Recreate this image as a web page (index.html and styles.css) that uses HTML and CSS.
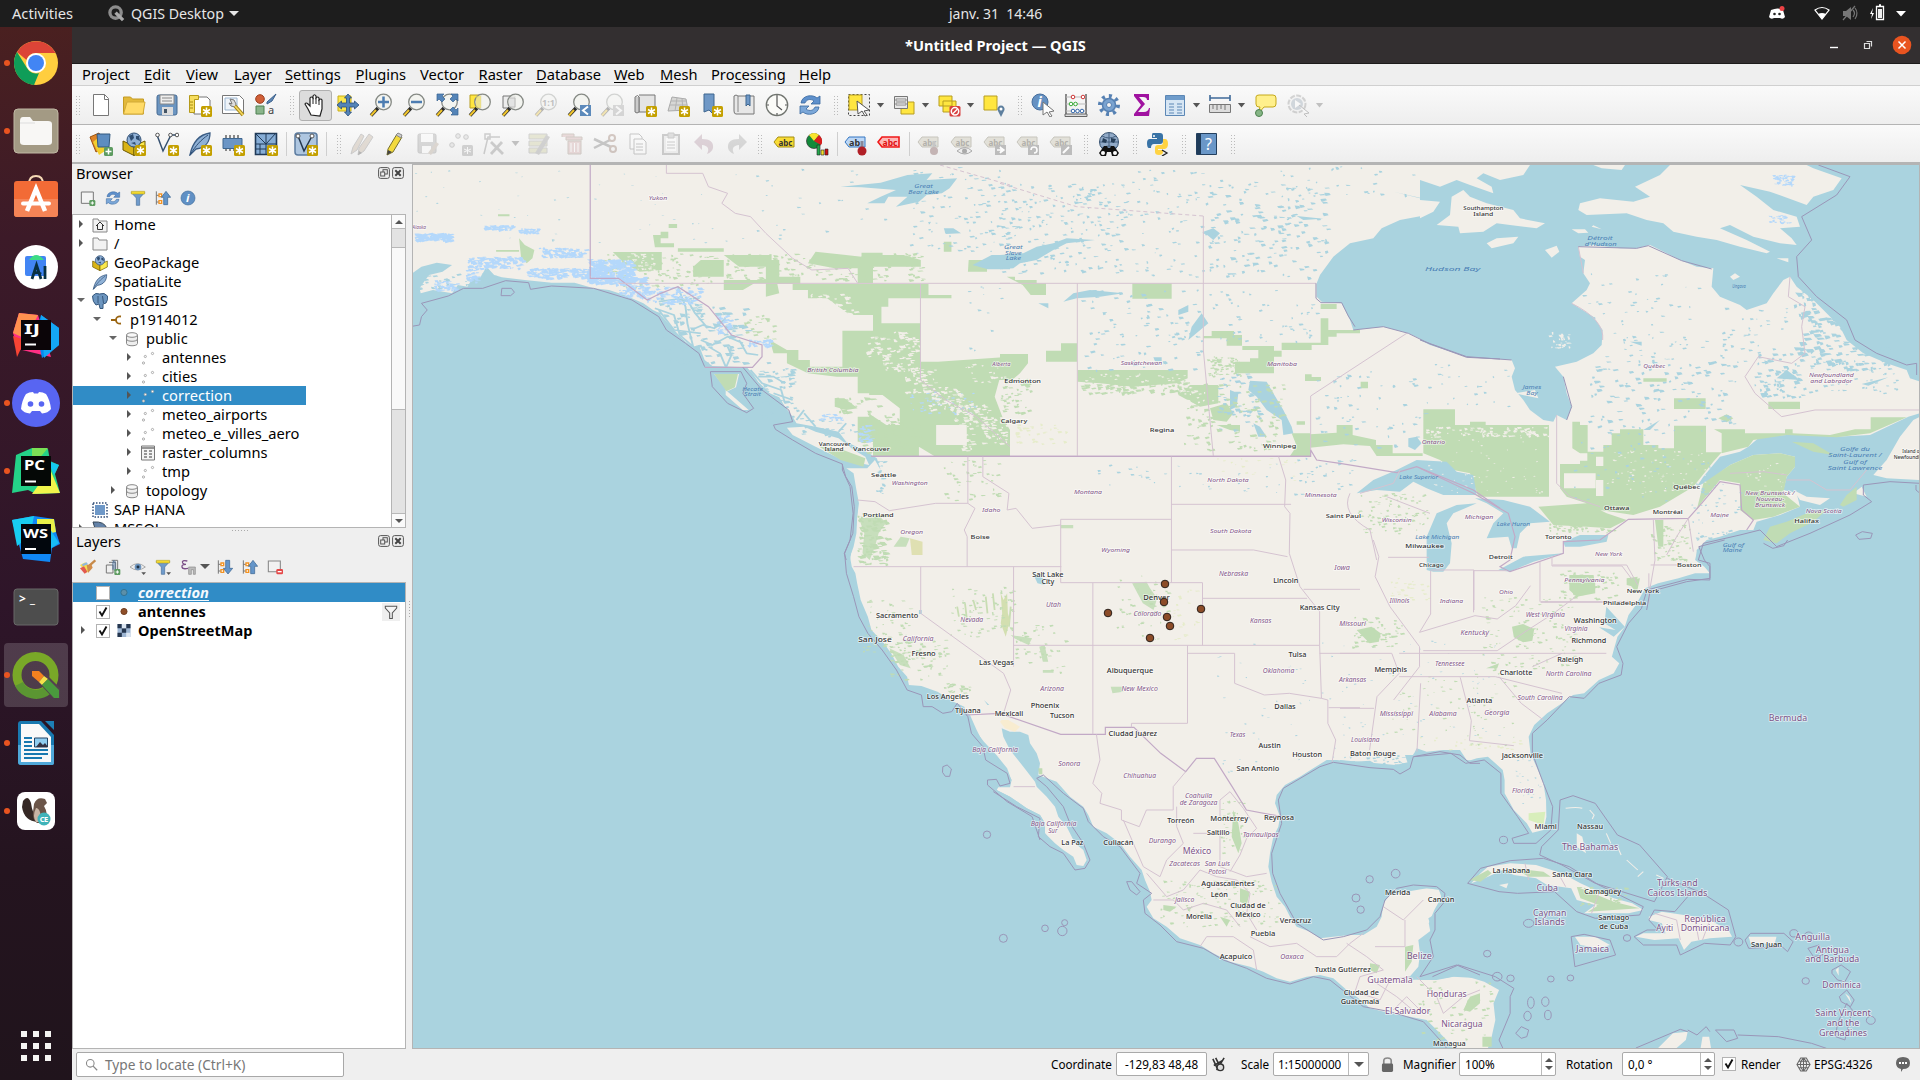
FILE: index.html
```html
<!DOCTYPE html>
<html lang="en">
<head>
<meta charset="utf-8">
<title>*Untitled Project — QGIS</title>
<link rel="stylesheet" href="styles.css">
</head>
<body>
<svg width="0" height="0" class="defs" aria-hidden="true"><defs>
<symbol id="star" viewBox="0 0 24 24"><rect x="13" y="13" width="11" height="11" rx="1.500" fill="#c4a000"/><path d="M18.500 14.500v8M15 16.500l7 4M15 20.500l7-4" stroke="#fff" stroke-width="1.500"/></symbol>
<symbol id="mag" viewBox="0 0 24 24"><path d="M9 15L2 22.500" stroke="#2b2b2b" stroke-width="3.400"/><path d="M7 17l-5 5.500" stroke="#f0c52c" stroke-width="2"/><circle cx="14.500" cy="9" r="7.800" fill="#f2f3ef" fill-opacity=".85" stroke="#868a85" stroke-width="1.300"/></symbol>
<symbol id="tag" viewBox="0 0 24 24"><path d="M2 11l4-5h16v10H6z" fill="#dedcd2" stroke="#bcbab0"/><text x="6.500" y="14.500" font-size="9" font-weight="700" fill="#a3a19a" textLength="14" lengthAdjust="spacingAndGlyphs">abc</text></symbol>
<symbol id="refresh" viewBox="0 0 24 24"><path d="M3 10c1-8 12-9 16-5l3-2v8h-9l3-3C12 5 8 7 7 10z" fill="#5e90cc" stroke="#39689f" stroke-width=".8"/><path d="M21 14c-1 8-12 9-16 5l-3 2v-8h9l-3 3c4 3 8 1 9-2z" fill="#7ba7d8" stroke="#39689f" stroke-width=".8"/></symbol>
<symbol id="funnel" viewBox="0 0 24 24"><path d="M2 4h20l-7.500 8v11h-5V12z" fill="#6f9bcc" stroke="#48709a"/><path d="M2 2h20v4H2z" fill="#f2d930" stroke="#b09a20" stroke-width=".8"/></symbol>
<symbol id="treeup" viewBox="0 0 24 24"><path d="M2 2v20M2 8h5M2 18h5" stroke="#777" stroke-width="1.500"/><path d="M6 6h4v4H6zM6 16h4v4H6z" fill="#fff" stroke="#f39322" stroke-width="2"/><path d="M19 22h-6V11H9.500l7-9 7 9H19z" fill="#6495c9" stroke="#36618e"/></symbol>
<symbol id="treedown" viewBox="0 0 24 24"><path d="M2 2v20M2 8h5M2 18h5" stroke="#777" stroke-width="1.500"/><path d="M6 6h4v4H6zM6 16h4v4H6z" fill="#fff" stroke="#f39322" stroke-width="2"/><path d="M13 2h6v12h4.500l-7 8.500-7-8.500H13z" fill="#6495c9" stroke="#36618e"/></symbol>
<symbol id="pts" viewBox="0 0 16 16"><g fill="#fff" stroke="#aaa"><circle cx="5.300" cy="6.500" r="1.100"/><circle cx="12.500" cy="3.500" r="1.100"/><circle cx="3.500" cy="13" r="1.100"/></g></symbol>
<symbol id="db" viewBox="0 0 16 16"><path d="M2.500 4v8.500c0 3 11 3 11 0V4" fill="#eee" stroke="#888"/><ellipse cx="8" cy="4" rx="5.500" ry="2.300" fill="#f8f8f8" stroke="#888"/><path d="M2.500 8c0 3 11 3 11 0" fill="none" stroke="#888"/></symbol>
<symbol id="feather" viewBox="0 0 24 24"><path d="M2 23C4 13 9 3 22 1c0 8-4 15-14 16z" fill="#8fb1d6" stroke="#3a5c84" stroke-width="1.300"/><path d="M2 23C8 13 13 8 20 3" fill="none" stroke="#2f4f76"/></symbol>
<symbol id="cube" viewBox="0 0 24 24"><path d="M1 9l11 5v9.500L1 18z" fill="#d9b417" stroke="#6d5800"/><path d="M23 9l-11 5v9.500L23 18z" fill="#fbe94c" stroke="#6d5800"/><circle cx="12" cy="8" r="7" fill="#8fb0d6" stroke="#304f74"/><path d="M7 4l4-2 1 4-3 3zM14 4l3 0 1 5-4-2zM9 11l4-1 1 3z" fill="#2f4d71"/></symbol>
<symbol id="gemA" viewBox="0 0 48 48"><path d="M7 2l19 2 13 42-33-8L1 22z" fill="#ff2f83"/><path d="M7 2L1 22l13 6 12-24z" fill="#ff914f"/><path d="M29 4l18 13v17L30 47 24 20z" fill="#0789ee"/><path d="M29 4l3 43 15-13V17z" fill="#14a7f5"/><path d="M1 25l12 4-8 17z" fill="#f84434"/></symbol>
<symbol id="ticks" viewBox="0 0 14 14"><rect x=".5" y=".5" width="13" height="13" fill="#fff" stroke="#b3b3b3"/><path d="M3.500 6.500l2.500 4 4.500-8" fill="none" stroke="#111" stroke-width="1.900"/></symbol>
<symbol id="float" viewBox="0 0 12 12"><rect x=".6" y=".6" width="10.800" height="10.800" rx="2" fill="none" stroke="#555"/><rect x="5" y="2.700" width="4.300" height="4.300" fill="none" stroke="#555"/><rect x="2.700" y="5" width="4" height="4" fill="#eee" stroke="#555"/></symbol>
<symbol id="shut" viewBox="0 0 12 12"><rect x=".6" y=".6" width="10.800" height="10.800" rx="2" fill="none" stroke="#555"/><path d="M3.300 3.300l5.400 5.400m0-5.400L3.300 8.700" stroke="#444" stroke-width="2"/></symbol>
</defs></svg>

<header class="topbar">
  <span class="activities">Activities</span>
  <svg class="qmono" viewBox="0 0 18 18"><circle cx="8" cy="8" r="6" fill="none" stroke="#8d8d8d" stroke-width="3.500"/><path d="M8 8l8 8" stroke="#aaa" stroke-width="3.500"/></svg>
  <span class="appname">QGIS Desktop</span><i class="caret light"></i>
  <time class="clock">janv. 31&nbsp; 14:46</time>
  <svg class="tray" viewBox="0 0 144 27"><path d="M4 10q7-3 12 0l2 7q-2 3-5 1H7q-3 2-5-1z" fill="#fff"/><circle cx="7.500" cy="14" r="1.300" fill="#222"/><circle cx="12.500" cy="14" r="1.300" fill="#222"/><circle cx="15" cy="8.500" r="2.500" fill="#ed4245"/><path d="M48 10q7-5 14 0l-7 9z" fill="none" stroke="#fff" stroke-width="1.200"/><path d="M51 14q4-2 8 0l-4 5z" fill="#fff"/><path d="M76 11h3l5-4v13l-5-4h-3z" fill="#777"/><path d="M76 20L88 6M86 10q3 3 0 7M88 8q4 5 0 11" fill="none" stroke="#777" stroke-width="1.200"/><path d="M106 8l-3 6h2l-1 5 3-6h-2z" fill="#fff"/><path d="M109.500 6.500h7v13h-7zM112 5h2" fill="none" stroke="#fff" stroke-width="1.300"/><path d="M111 9h4v9h-4z" fill="#eee"/><path d="M129 11h10l-5 5.500z" fill="#fff"/></svg>
</header>

<div class="desktop">
<nav class="dock">
  <div class="app run"><svg viewBox="0 0 48 48"><circle cx="24" cy="24" r="22" fill="#ffce3f"/><path d="M5 13A22 22 0 0 1 43.500 14H24a10 10 0 0 0-9.500 7z" fill="#dc4437"/><path d="M5 13l10 16a10 10 0 0 0 12 5l-5 12A22 22 0 0 1 5 13z" fill="#0f9d58"/><circle cx="24" cy="24" r="10" fill="#fff"/><circle cx="24" cy="24" r="8" fill="#4285f4"/></svg></div>
  <div class="app run"><svg viewBox="0 0 48 48"><rect x="2" y="2" width="44" height="44" rx="4" fill="#a39a84" stroke="#c0b8a4"/><path d="M8 14q0-4 3-4h7l3 4h15q4 0 4 3v18q0 3-4 3H12q-4 0-4-3z" fill="#f8f7f5"/><path d="M8 16h15" stroke="#ddd"/></svg></div>
  <div class="app"><svg viewBox="0 0 48 48"><path d="M17 9q0-8 7-8t7 8" fill="none" stroke="#f5d9b5" stroke-width="2"/><rect x="2" y="6" width="44" height="36" rx="3" fill="#f26b36"/><path d="M2 24h44v15q0 3-3 3H5q-3 0-3-3z" fill="#f58456"/><path d="M15 36l9-22 9 22" fill="none" stroke="#fff" stroke-width="4.500"/><path d="M11 28.500h26" stroke="#fff" stroke-width="4" stroke-linecap="round"/></svg></div>
  <div class="app"><svg viewBox="0 0 48 48"><circle cx="24" cy="24" r="22" fill="#fff"/><rect x="13" y="13" width="21" height="20" rx="2" fill="#4285f4"/><path d="M17 17q7-10 15 0z" fill="#3ddc84"/><path d="M20 36l4.500-14L29 36M21 31q4-3 8 0M33 23v13" fill="none" stroke="#073042" stroke-width="2.800"/></svg></div>
  <div class="app"><svg viewBox="0 0 48 48"><use href="#gemA"/><rect x="9" y="9" width="30" height="30" fill="#0b0508"/><text x="12" y="23" font-size="14" font-weight="700" fill="#fff" textLength="16" lengthAdjust="spacingAndGlyphs">IJ</text><path d="M13 33.500h11" stroke="#fff" stroke-width="2"/></svg></div>
  <div class="app run"><svg viewBox="0 0 48 48"><circle cx="24" cy="24" r="24" fill="#5865f2"/><path d="M14 15q3-2 7-2l1 1.500h4l1-1.500q4 0 7 2 4 6 5 15-3 4-9 4.500l-2-2.500h-8l-2 2.500q-6-.5-9-4.500 1-9 5-15z" fill="#fff"/><circle cx="18.500" cy="25" r="2.800" fill="#5865f2"/><circle cx="29.500" cy="25" r="2.800" fill="#5865f2"/></svg></div>
  <div class="app run"><svg viewBox="0 0 48 48"><path d="M4 8l16-7 16 1 2 12 9 4-4 9 5 19-24 1-8-4-16 3z" fill="#24d288"/><path d="M20 1h16L20 20z" fill="#7be055"/><path d="M36 14l11 4-5 10z" fill="#14c8f0"/><path d="M38 22l10 24-28 1z" fill="#f1f54b"/><rect x="9" y="9" width="30" height="30" fill="#050806"/><text x="12" y="23" font-size="14" font-weight="700" fill="#fff" textLength="21" lengthAdjust="spacingAndGlyphs">PC</text><path d="M13 34.500h11" stroke="#fff" stroke-width="2"/></svg></div>
  <div class="app"><svg viewBox="0 0 48 48"><path d="M0 5l22-4 20 3 2 13 4 12-8 4-2 14-27-3z" fill="#1088f5"/><path d="M0 5l22-4-4 20-13 10z" fill="#18cdf1"/><path d="M25 4l17 0 2 13-19 4z" fill="#e8f149"/><path d="M38 14l9 14-9 6z" fill="#18bdf4"/><rect x="9" y="9" width="30" height="30" fill="#02070d"/><text x="11" y="23" font-size="13" font-weight="700" fill="#fff" textLength="25" lengthAdjust="spacingAndGlyphs">WS</text><path d="M13 34h11" stroke="#fff" stroke-width="2"/></svg></div>
  <div class="app"><svg viewBox="0 0 48 48"><rect x="2" y="6" width="44" height="36" rx="3" fill="#4d4d4d" stroke="#686868"/><text x="7" y="20" font-size="12" font-weight="700" fill="#fff" textLength="16">&gt;_</text></svg></div>
  <div class="app run active"><svg viewBox="0 0 48 48"><circle cx="23.500" cy="24" r="18.500" fill="none" stroke="#79a828" stroke-width="9"/><path d="M7 33a19 19 0 0 0 29 6" fill="none" stroke="#5b9632" stroke-width="9"/><path d="M26 31l8-8 15 15v9h-8z" fill="#54404f"/><path d="M20 20h7l5 5-5 6-7-6z" fill="#f38120"/><path d="M27 31l5-6 4 3-6 6z" fill="#f4e24b"/><path d="M30 34l6-6 11 11v8h-5z" fill="#4a9a3d"/></svg></div>
  <div class="app run"><svg viewBox="0 0 48 48"><path d="M9 2h20l13 14v28q0 2-3 2H9q-3 0-3-3V5q0-3 3-3z" fill="#1979b0"/><path d="M6 26h36v18q0 2-3 2H9q-3 0-3-3z" fill="#4fa8d9"/><path d="M9 5h18l12 13v25H9z" fill="#f9f9f9"/><path d="M33 2h9v9z" fill="#1d7fb5"/><path d="M12 19h8M12 23h8M12 27h8M12 31h24M12 35h24M12 39h18" stroke="#1979b0" stroke-width="1.800"/><path d="M22.500 19h13v9h-13z" fill="#8fcdf0" stroke="#246"/><path d="M24 28l4-5 3 3 2-2 3 4z" fill="#334"/></svg></div>
  <div class="app run"><svg viewBox="0 0 48 48"><rect x="5" y="5" width="38" height="38" rx="8" fill="#fff"/><path d="M11 14q5-7 8 2 1 9 7 19-14-1-16-15z" fill="#352824"/><path d="M22 17q3-8 11-5l2 4-3 3q5 8 1 17h-8q-5-4-4-11z" fill="#6b5549"/><path d="M24 21q5 0 5 14h-5q-4-6 0-14z" fill="#c9b5a5"/><circle cx="32" cy="32" r="6.500" fill="#3fb3b9"/><text x="27.700" y="35" font-size="7.500" font-weight="700" fill="#fff" textLength="8.500">CE</text></svg></div>
  <svg class="grid9" viewBox="0 0 30 30"><path d="M0 3h6m6 0h6m6 0h6M0 15h6m6 0h6m6 0h6M0 27h6m6 0h6m6 0h6" stroke="#f5f4f2" stroke-width="6"/></svg>
</nav>

<main class="window">
<div class="titlebar"><b>*Untitled Project — QGIS</b><svg viewBox="0 0 94 36"><path d="M6 20.500h8" stroke="#fff" stroke-width="1.400"/><path d="M40.500 16.500h5v5h-5zM42.500 14.500h5v5" fill="none" stroke="#ddd" stroke-width="1.200"/><circle cx="78" cy="18" r="9.300" fill="#e95420"/><path d="M74.500 14.500l7 7m0-7l-7 7" stroke="#fff" stroke-width="1.500"/></svg></div>
<div class="menubar"><span>Pro<u>j</u>ect</span><span><u>E</u>dit</span><span><u>V</u>iew</span><span><u>L</u>ayer</span><span><u>S</u>ettings</span><span><u>P</u>lugins</span><span>Vect<u>o</u>r</span><span><u>R</u>aster</span><span><u>D</u>atabase</span><span><u>W</u>eb</span><span><u>M</u>esh</span><span>Pro<u>c</u>essing</span><span><u>H</u>elp</span></div>

<div class="toolbar">
<i class="grip first"></i>
<span class="c"><svg viewBox="0 0 24 24"><path d="M4.500 1.500h11l4 4v17h-15z" fill="#fff" stroke="#777"/><path d="M15.500 1.500v5h4" fill="none" stroke="#777"/></svg></span>
<span class="c"><svg viewBox="0 0 24 24"><path d="M1.500 21V4h7l2 2h11v15z" fill="#e2b93b" stroke="#c49b22"/><path d="M1.500 21L5 9h18l-2 12z" fill="#ffdb68" stroke="#d2aa38"/></svg></span>
<span class="c"><svg viewBox="0 0 24 24"><rect x="2" y="2" width="20" height="20" rx="2" fill="#6b95c1" stroke="#466b93"/><path d="M5 2h14v9H5z" fill="#eee" stroke="#888"/><path d="M7 5h10M7 8h10" stroke="#888"/><path d="M7 14h11v8H7z" fill="#ddd"/><path d="M9 16h3v4H9z" fill="#456"/></svg></span>
<span class="c"><svg viewBox="0 0 24 24"><path d="M6 4h13l3 3v14H6z" fill="#fff" stroke="#777"/><path d="M1.500 2.500h9v4h-4v13h-5z" fill="#f6dd5e" stroke="#b59a1a"/><path d="M2 9h3M2 12h3M2 15h3" stroke="#aa8e10"/><use href="#star"/></svg></span>
<span class="c"><svg viewBox="0 0 24 24"><path d="M1.500 2.500h17l4 4v14h-21z" fill="#fff" stroke="#777"/><path d="M4 5h12v12H4z" fill="#eef3f8" stroke="#9cb6d0"/><path d="M9 6l4 1 2 4-1 3-4-1-2-3 3 1z" fill="#ddd" stroke="#777"/><path d="M14 13l8 9" stroke="#a48515" stroke-width="3.500"/><path d="M14 13l8 9" stroke="#f4d75d" stroke-width="1.800"/></svg></span>
<span class="c"><svg viewBox="0 0 24 24"><circle cx="6" cy="6" r="4.300" fill="#d15f37" stroke="#9b3e1e"/><path d="M13 9l9-8-4 7-5 3z" fill="#5d87b6" stroke="#3c618c"/><path d="M2 13h8v8H2z" fill="#8bb58b" stroke="#4c8050"/><text x="14" y="20.500" font-size="11" fill="#444">a</text></svg></span>
<i class="grip"></i>
<span class="c pressed"><svg viewBox="0 0 24 24"><path d="M8 22l-3-6-3-5q1-2 3 0l2 2V5q1.500-2 3 0V3q1.500-2.500 3 0v2q1.500-2 3 0v2q2-2 3 0v9l-2 7z" fill="#fff" stroke="#222" stroke-width="1.200"/><path d="M10 5v6M13 5v6M16 7v5" stroke="#222"/></svg></span>
<span class="c"><svg viewBox="0 0 24 24"><path d="M2 3h13v15H2z" fill="#fde84c" stroke="#c9ae1b"/><path d="M12 1l3.500 4h-2v5h5V8l4.500 4-4.500 4v-2h-5v5h2L12 23l-3.500-4h2v-5h-5v2L1 12l4.500-4v2h5V5h-2z" fill="#5484b8" stroke="#294e7c" stroke-width=".8"/></svg></span>
<span class="c"><svg viewBox="0 0 24 24"><use href="#mag"/><path d="M9 9h11M14.500 3.500v11" stroke="#4d7db1" stroke-width="2.500"/></svg></span>
<span class="c"><svg viewBox="0 0 24 24"><use href="#mag"/><path d="M9 9h11" stroke="#4d7db1" stroke-width="2.500"/></svg></span>
<span class="c"><svg viewBox="0 0 24 24"><use href="#mag"/><path d="M2 1h7L7 3l3 3-3 3-3-3-2 2zM23 1h-7l2 2-3 3 3 3 3-3 2 2zM23 22h-7l2-2-3-3 3-3 3 3 2-2z" fill="#5484b8" stroke="#37618f" stroke-width=".7"/></svg></span>
<span class="c"><svg viewBox="0 0 24 24"><path d="M2 2h11v13H2z" fill="#ffe640" stroke="#b79d20"/><use href="#mag"/><path d="M8 3h5v12H8z" fill="#e8d85a" opacity=".6"/></svg></span>
<span class="c"><svg viewBox="0 0 24 24"><path d="M2 3h12v12H2z" fill="#ececec" stroke="#777"/><use href="#mag"/><path d="M8 5h6v9H8" fill="#ddd" stroke="#aaa" opacity=".7"/></svg></span>
<span class="c off"><svg viewBox="0 0 24 24"><use href="#mag"/><text x="8" y="12.500" font-size="9" font-weight="700" fill="#555" textLength="13">1:1</text></svg></span>
<span class="c"><svg viewBox="0 0 24 24"><use href="#mag"/><path d="M13 12h11v11H13z" fill="#5c8abb"/><path d="M21 13.500l-5 4 5 4" fill="none" stroke="#fff" stroke-width="2"/></svg></span>
<span class="c off"><svg viewBox="0 0 24 24"><use href="#mag"/><path d="M13 12h11v11H13z" fill="#999"/><path d="M16 13.500l5 4-5 4" fill="none" stroke="#fff" stroke-width="2"/></svg></span>
<span class="c"><svg viewBox="0 0 24 24"><path d="M2 4q3-3 4 0v15H22V2H6" fill="#e4e4e4" stroke="#777"/><path d="M2 4v15q2 2 4 0V4" fill="#ccc" stroke="#777"/><use href="#star"/></svg></span>
<span class="c"><svg viewBox="0 0 24 24"><path d="M6 4l14 2 2 11-20 1z" fill="#d7d7d5" stroke="#aaa"/><path d="M4 12l17 0M11 5l-2 13M16 5l1 13M5 8h16" stroke="#b3b3b3"/><use href="#star"/></svg></span>
<span class="c"><svg viewBox="0 0 24 24"><path d="M5 1h10v21l-5-5-5 2z" fill="#6f98c6" stroke="#3e668f"/><use href="#star"/></svg></span>
<span class="c"><svg viewBox="0 0 24 24"><path d="M2 3q2-2 4 0h16v18H4q-2 0-2-3z" fill="#e7e7e7" stroke="#777"/><path d="M6 3v16" stroke="#888"/><path d="M14 2h4v11l-2-2-2 2z" fill="#6f98c6" stroke="#3e668f"/></svg></span>
<span class="c"><svg viewBox="0 0 24 24"><circle cx="12" cy="12" r="10.700" fill="#fbfbf8" stroke="#70746f" stroke-width="1.300"/><path d="M12 4v9l5 4M12 2v2M12 20v2M2 12h2M20 12h2" stroke="#555" fill="none" stroke-width="1.200"/></svg></span>
<span class="c"><svg viewBox="0 0 24 24"><use href="#refresh"/></svg></span>
<i class="grip"></i>
<span class="c"><svg viewBox="0 0 24 24"><path d="M1.500 1.500h21v21h-21z" fill="#eee" stroke="#444" stroke-dasharray="2 2"/><path d="M2 2h13v15H2z" fill="#ffe640" stroke="#b79d20"/><path d="M10 8l12 9-5 1 3 4-2 1-3-5-4 3z" fill="#fff" stroke="#555"/></svg></span><i class="a"></i>
<span class="c"><svg viewBox="0 0 24 24"><path d="M9 9h13v12H9z" fill="#ffe640" stroke="#b79d20"/><path d="M2.500 3.500h13v12h-13z" fill="#e8e8e8" stroke="#777"/><path d="M4 6h10v2H4zM4 10h10v2H4z" fill="#fff" stroke="#888"/></svg></span><i class="a"></i>
<span class="c"><svg viewBox="0 0 24 24"><path d="M2 3h13v10H2zM6 8h13v11H6z" fill="#ffe640" stroke="#b79d20"/><rect x="12.500" y="13" width="11" height="10.500" rx="1.500" fill="#d84040"/><circle cx="18" cy="18.300" r="3.700" fill="none" stroke="#fff" stroke-width="1.500"/><path d="M15.500 21l5-5" stroke="#fff" stroke-width="1.500"/></svg></span><i class="a"></i>
<span class="c"><svg viewBox="0 0 24 24"><path d="M2 3h13v14H2z" fill="#ffe640" stroke="#b79d20"/><path d="M19 24l-3.500-7a3.600 3.600 0 1 1 7 0z" fill="#5e7f9e"/><circle cx="19" cy="16" r="1.500" fill="#fff"/></svg></span>
<i class="grip"></i>
<span class="c"><svg viewBox="0 0 24 24"><circle cx="9" cy="9" r="8" fill="#6591c2" stroke="#476f9e"/><text x="6.500" y="14" font-size="14" font-family="Liberation Serif" font-style="italic" font-weight="700" fill="#fff">i</text><path d="M12 9l11 9-5 1 3 4-2 1-3-5-4 3z" fill="#fff" stroke="#777"/></svg></span>
<span class="c"><svg viewBox="0 0 24 24"><path d="M2 1v20M22 1v20" stroke="#666" stroke-width="1.500"/><path d="M1 21h22v2.500H1z" fill="#ddd" stroke="#666"/><path d="M2 4h20M2 11h20M2 18h20" stroke="#bbb"/><g fill="#fff" stroke-width="1"><g stroke="#c33"><circle cx="9" cy="4" r="1.800"/><circle cx="19" cy="4" r="1.800"/></g><g stroke="#3a3"><circle cx="7" cy="11" r="1.800"/><circle cx="11.500" cy="11" r="1.800"/></g><g stroke="#36a"><circle cx="9" cy="18" r="1.800"/><circle cx="13.500" cy="18" r="1.800"/><circle cx="18" cy="18" r="1.800"/></g></g></svg></span>
<span class="c"><svg viewBox="0 0 24 24"><circle cx="12" cy="12" r="9" fill="none" stroke="#5681b3" stroke-width="4" stroke-dasharray="3 4"/><circle cx="12" cy="12" r="6.500" fill="#7aa3d0" stroke="#5681b3" stroke-width="1.500"/><circle cx="12" cy="12" r="2.500" fill="#f3f3f3" stroke="#5681b3"/></svg></span>
<span class="c"><svg viewBox="0 0 24 24"><path d="M4 1h15v6h-2q0-3-4-3H9l6 7-7 8h6q4 0 5-4h1l-1 8H4v-2l7-9-7-9z" fill="#a012a0"/></svg></span>
<span class="c"><svg viewBox="0 0 24 24"><path d="M2.500 2.500h19v20h-19z" fill="#d7e6f4" stroke="#5c87b5"/><path d="M3 3h18v4H3z" fill="#6f9ccb"/><path d="M6 11h5M6 14h5M6 17h5M14 11h5M14 14h5M14 17h5M6 20h5M14 20h5" stroke="#5c87b5"/></svg></span><i class="a"></i>
<span class="c"><svg viewBox="0 0 24 24"><path d="M2 5h20M2 2v6M22 2v6" stroke="#3f6a99" stroke-width="1.600"/><path d="M1.500 11.500h21v8h-21z" fill="#ddd" stroke="#777"/><path d="M5 12v4M9 12v5M13 12v4M17 12v5" stroke="#777"/></svg></span><i class="a"></i>
<span class="c"><svg viewBox="0 0 24 24"><path d="M3 4q0-2 3-2h14q3 0 3 3v6q0 3-3 3h-9l-6 7 2-7H6q-3 0-3-3z" fill="#fff08c" stroke="#c5a91a"/><circle cx="6" cy="20" r="3.500" fill="#86b586" stroke="#4d824f"/></svg></span>
<span class="c off"><svg viewBox="0 0 24 24"><circle cx="11" cy="11" r="8.500" fill="#eee" stroke="#888" stroke-width="2" stroke-dasharray="5 1.500"/><circle cx="11" cy="11" r="6" fill="#89a"/><path d="M9 7l6 4-6 4z" fill="#fff"/><path d="M13 12l10 8-5 1 3 3" fill="#fff" stroke="#555"/></svg></span><i class="a off"></i>
</div>

<div class="toolbar two">
<i class="grip first"></i>
<span class="c"><svg viewBox="0 0 24 24"><path d="M1 5l9-4 6 14-9 5z" fill="#e08528" stroke="#9d5411"/><path d="M4 10l6-5 9 12-9 6z" fill="#f2d02f"/><path d="M8 2h13l-1 13H9z" fill="#5e8dc0" stroke="#32597f"/><rect x="15" y="15" width="9" height="9" rx="1.500" fill="#5d9b60"/><path d="M19.500 16.500v6M16.500 19.500h6" stroke="#fff" stroke-width="1.500"/></svg></span>
<span class="c"><svg viewBox="0 0 24 24"><use href="#cube"/><use href="#star"/></svg></span>
<span class="c"><svg viewBox="0 0 24 24"><path d="M2 3l6 16 8-16h5" fill="none" stroke="#35506f" stroke-width="1.500"/><g fill="#fff" stroke="#555"><circle cx="2.500" cy="3" r="1.800"/><circle cx="15.500" cy="3" r="1.800"/><circle cx="22" cy="3" r="1.800"/></g><use href="#star"/></svg></span>
<span class="c"><svg viewBox="0 0 24 24"><use href="#feather"/><use href="#star"/></svg></span>
<span class="c"><svg viewBox="0 0 24 24"><path d="M5 3v16M9 3v16M13 3v16M17 3v16" stroke="#666" stroke-width="1.500"/><path d="M2 6.500h19v10H2z" fill="#6b95c5" stroke="#3e668f"/><use href="#star"/></svg></span>
<span class="c"><svg viewBox="0 0 24 24"><path d="M1.500 1.500h21v21h-21z" fill="#86add6" stroke="#203a58" stroke-width="1.600"/><path d="M1 12h22M12 1v22M1 1l11 11M12 12L22 1M1 17h11M6 12v11" stroke="#203a58"/><use href="#star"/></svg></span>
<i class="bar"></i>
<span class="c"><svg viewBox="0 0 24 24"><rect x="1" y="1" width="22" height="22" rx="3" fill="#aec6e0" stroke="#5c7ca0" stroke-width="1.500"/><path d="M4 4l6 15 8-15" fill="none" stroke="#23374e" stroke-width="1.500"/><circle cx="4" cy="4" r="2" fill="#fff" stroke="#555"/><circle cx="18" cy="4" r="2" fill="#fff" stroke="#555"/><use href="#star"/></svg></span>
<i class="bar"></i><i class="grip"></i>
<span class="c off"><svg viewBox="0 0 24 24"><path d="M1 22l2-7 8-13 3 2-7 14zM8 23l1-7L19 2l4 3-9 14z" fill="#b9a58f" stroke="#777"/><path d="M8 23l1-4 3 2z" fill="#333"/></svg></span>
<span class="c"><svg viewBox="0 0 24 24"><path d="M4 23l1-6L14 2l5 3-9 15z" fill="#f3da3e" stroke="#77702f"/><path d="M4 23l1-5 4 2z" fill="#444"/><path d="M13 3l5 3 1-3-4-2z" fill="#ccc" stroke="#888"/></svg></span>
<span class="c off"><svg viewBox="0 0 24 24"><rect x="2" y="2" width="18" height="19" rx="1.500" fill="#999" stroke="#777"/><path d="M5 2h12v8H5zM6 14h9v7H6z" fill="#fff"/><path d="M12 21l8-11 3 2-8 11z" fill="#a98"/></svg></span>
<span class="c off"><svg viewBox="0 0 24 24"><g fill="#ccc" stroke="#777"><circle cx="9" cy="4" r="2.300"/><circle cx="17" cy="5" r="2.300"/><circle cx="3" cy="13" r="2.300"/></g><rect x="13" y="13" width="11" height="11" rx="1.500" fill="#888"/><path d="M18.500 15v7M15 17l7 3M15 20l7-3" stroke="#fff"/></svg></span>
<span class="c off"><svg viewBox="0 0 24 24"><path d="M2 22L6 5h12M3 2h5v5H3z" fill="none" stroke="#777" stroke-width="1.500"/><path d="M9 10l12 12M20 10L9 22" fill="none" stroke="#777" stroke-width="2.800"/></svg></span><i class="a off"></i>
<span class="c off"><svg viewBox="0 0 24 24"><path d="M2 2h18v5H2zM2 9h18v5H2zM2 16h18v5H2z" fill="#c5c58e" stroke="#888"/><path d="M8 21L19 3l4 2-11 18z" fill="#888"/></svg></span>
<span class="c off"><svg viewBox="0 0 24 24"><path d="M2 5V2h12v3M6 5h16v3H6zM8 9h13v13H8z" fill="#cc9d9d" stroke="#876"/><path d="M11 11v9M14.500 11v9M18 11v9" stroke="#fff"/></svg></span>
<span class="c off"><svg viewBox="0 0 24 24"><path d="M1 7l17 8M1 16L17 8" stroke="#666" stroke-width="2.500"/><circle cx="20" cy="17" r="3" fill="none" stroke="#865" stroke-width="2"/><circle cx="19" cy="6" r="3" fill="none" stroke="#865" stroke-width="2"/></svg></span>
<span class="c off"><svg viewBox="0 0 24 24"><path d="M4 2h9l3 3v12H4z" fill="#fff" stroke="#666"/><path d="M8 7h9l3 3v12H8z" fill="#fff" stroke="#666"/><path d="M10 12h7M10 15h7M10 18h7" stroke="#666"/></svg></span>
<span class="c off"><svg viewBox="0 0 24 24"><path d="M4 3h16v19H4z" fill="#ddd" stroke="#777" stroke-width="2"/><path d="M7 6h10v13H7z" fill="#fff"/><path d="M9 1h6v5H9zM8 10h8M8 13h8M8 16h8" fill="#aaa" stroke="#777"/></svg></span>
<span class="c off"><svg viewBox="0 0 24 24"><path d="M2 10l8-8v5q12 0 11 9-1 4-6 6 4-8-5-9v5z" fill="#a89"/></svg></span>
<span class="c off"><svg viewBox="0 0 24 24"><path d="M22 10l-8-8v5Q2 7 3 16q1 4 6 6-4-8 5-9v5z" fill="#999"/></svg></span>
<i class="grip g14"></i>
<span class="c"><svg viewBox="0 0 24 24"><path d="M2 10l4-5h16v10H6z" fill="#f9dc36" stroke="#a58e12"/><text x="6.500" y="13.500" font-size="9" font-weight="700" fill="#333" textLength="14" lengthAdjust="spacingAndGlyphs">abc</text></svg></span>
<span class="c"><svg viewBox="0 0 24 24"><circle cx="9" cy="9" r="7.500" fill="#128a3a" stroke="#333" stroke-width=".7"/><path d="M9 9L4 3q5-4 10 0z" fill="#f8e42c"/><path d="M9 9l5-6q5 5 2 10z" fill="#d81e1e"/><path d="M12 13h3v10h-3z" fill="#24a74d" stroke="#222" stroke-width=".6"/><path d="M16 18h3v5h-3z" fill="#f2e02d" stroke="#222" stroke-width=".6"/><path d="M20 17h3v6h-3z" fill="#c11" stroke="#222" stroke-width=".6"/></svg></span>
<i class="bar b5"></i>
<span class="c"><svg viewBox="0 0 24 24"><path d="M1 10l4-5h16v10H5z" fill="#bcd7f6" stroke="#3477c2"/><text x="5" y="13.500" font-size="9" font-weight="700" fill="#333">ab</text><path d="M18 9v8" stroke="#889" stroke-width="3"/><circle cx="18" cy="19" r="4.500" fill="#b11f26"/></svg></span>
<span class="c"><svg viewBox="0 0 24 24"><path d="M1 10l4-5h17v10H5z" fill="#fdb8b8" stroke="#f01818" stroke-width="1.600"/><text x="5.500" y="13.500" font-size="9" font-weight="700" fill="#e01010" textLength="15" lengthAdjust="spacingAndGlyphs">abc</text></svg></span>
<i class="bar b5"></i>
<span class="c dim"><svg viewBox="0 0 24 24"><use href="#tag" y="-1"/><path d="M18 9v8" stroke="#bbb" stroke-width="3"/><circle cx="18" cy="19" r="4" fill="#b9a5a5"/></svg></span>
<span class="c dim"><svg viewBox="0 0 24 24"><use href="#tag" y="-1"/><path d="M8 19q8-7 15 0-7 6-15 0z" fill="#eee" stroke="#999"/><circle cx="15.500" cy="19" r="2.500" fill="#999"/></svg></span>
<span class="c dim"><svg viewBox="0 0 24 24"><use href="#tag" y="-1"/><path d="M13 13h11v10H13z" fill="#b0b0b0"/><path d="M15 18h5l-2-3 4 3-4 3 2-3" stroke="#fff" stroke-width="1.500" fill="#fff"/></svg></span>
<span class="c dim"><svg viewBox="0 0 24 24"><use href="#tag" y="-1"/><path d="M13 13h11v10H13z" fill="#b0b0b0"/><path d="M16 18a3 3 0 1 1 3 3" stroke="#fff" stroke-width="1.600" fill="none"/></svg></span>
<span class="c dim"><svg viewBox="0 0 24 24"><use href="#tag" y="-1"/><path d="M13 13h11v10H13z" fill="#b0b0b0"/><path d="M15 21l6-6" stroke="#fff" stroke-width="2"/></svg></span>
<i class="grip"></i>
<span class="c"><svg viewBox="0 0 24 24"><circle cx="12" cy="10" r="9.500" fill="#91aac7" stroke="#36516f"/><path d="M2 10h20M12 1v19M5 4q7 4 14 0M5 16q7-4 14 0" fill="none" stroke="#445f7e"/><path d="M6 6l4 2-1 3-4-1zM14 6l5 1-2 4-3-1z" fill="#263e58"/><path d="M7 14h3l1 2h2l1-2h3l5 7-2 3h-5l-1-4h-4l-1 4H4l-2-3z" fill="#111"/><circle cx="6" cy="21" r="2" fill="#fff"/><circle cx="18" cy="21" r="2" fill="#fff"/></svg></span>
<i class="grip"></i>
<span class="c"><svg viewBox="0 0 24 24"><path d="M7 1h7q3 0 3 3v5q0 3-3 3H8q-3 0-3 4H3Q1 16 1 11q0-4 3-4h7V6H6V3q0-2 1-2z" fill="#3973a6"/><path d="M17 7h2q3 0 3 5 0 4-3 5h-7v1h5v2q0 3-4 3t-4-3v-4q0-3 3-3h3q2 0 2-3z" fill="#ffd343"/><circle cx="8" cy="4" r="1" fill="#fff"/><path d="M16 18l5 3-5 3" fill="none" stroke="#222" stroke-width="1.300"/></svg></span>
<i class="grip"></i>
<span class="c"><svg viewBox="0 0 24 24"><path d="M1.500 1.500h20v21h-20z" fill="#6a97c8" stroke="#24405f"/><path d="M2 2h4v20H2z" fill="#1f3c5a"/><text x="10" y="18" font-size="16" fill="#fff">?</text></svg></span>
<i class="grip w20"></i>
</div>

<div class="work">
<aside class="docks">
 <section class="browser">
  <div class="dhead"><span>Browser</span><svg><use href="#float"/></svg><svg><use href="#shut"/></svg></div>
  <div class="dtools">
   <svg viewBox="0 0 24 24"><path d="M2 3h18v17H2z" fill="#f4f4f4" stroke="#777" stroke-width="1.500"/><rect x="14" y="15" width="9" height="9" rx="2" fill="#5d9b60"/><path d="M18.500 17v5M16 19.500h5" stroke="#fff" stroke-width="1.500"/></svg>
   <svg viewBox="0 0 24 24"><use href="#refresh"/></svg><svg viewBox="0 0 24 24"><use href="#funnel"/></svg><svg viewBox="0 0 24 24"><use href="#treeup"/></svg>
   <svg viewBox="0 0 24 24"><circle cx="12" cy="12" r="10.500" fill="#6090c4" stroke="#406c9c"/><text x="9" y="18" font-size="17" font-family="Liberation Serif" font-style="italic" font-weight="700" fill="#fff">i</text></svg>
  </div>
  <div class="tree">
   <div class="rows">
    <div class="r"><i class="x"></i><svg viewBox="0 0 16 16"><path d="M1 2h5l1 2h8v11H1z" fill="#f2f2f2" stroke="#888"/><path d="M4 9l4-4 4 4M5.500 8v4.500h5V8" fill="none" stroke="#333"/></svg>Home</div>
    <div class="r"><i class="x"></i><svg viewBox="0 0 16 16"><path d="M1 2h5l1 2h8v10H1z" fill="#f2f2f2" stroke="#888"/></svg>/</div>
    <div class="r"><i></i><svg viewBox="0 0 24 24"><use href="#cube"/></svg>GeoPackage</div>
    <div class="r"><i></i><svg viewBox="0 0 24 24"><use href="#feather"/></svg>SpatiaLite</div>
    <div class="r"><i class="o"></i><svg viewBox="0 0 16 16"><path d="M.5 3q3-4 7-2 5-2 8 2 1 3-1.500 7l-3 1v4.500H8L7 11l-3 1Q.5 9 .5 3z" fill="#6c95bf" stroke="#36587d"/><path d="M6 3v7M10.500 3l1 7" stroke="#36587d"/></svg>PostGIS</div>
    <div class="r l1"><i class="o"></i><svg viewBox="0 0 16 16"><path d="M3 8h5M13 4.500Q8 4 8 8t5 3.500" fill="none" stroke="#9a6410" stroke-width="1.800"/></svg>p1914012</div>
    <div class="r l2"><i class="o"></i><svg><use href="#db"/></svg>public</div>
    <div class="r l3"><i class="x"></i><svg><use href="#pts"/></svg>antennes</div>
    <div class="r l3"><i class="x"></i><svg><use href="#pts"/></svg>cities</div>
    <div class="r l3 sel"><i class="x"></i><svg><use href="#pts"/></svg>correction</div>
    <div class="r l3"><i class="x"></i><svg><use href="#pts"/></svg>meteo_airports</div>
    <div class="r l3"><i class="x"></i><svg><use href="#pts"/></svg>meteo_e_villes_aero</div>
    <div class="r l3"><i class="x"></i><svg viewBox="0 0 16 16"><path d="M1.500 1h13v14h-13z" fill="#f4f4f4" stroke="#777"/><path d="M2 3h12M4 6h3M9 6h3M4 9h3M9 9h3M4 12h3M9 12h3" stroke="#777" stroke-width="1.300"/></svg>raster_columns</div>
    <div class="r l3"><i class="x"></i><svg><use href="#pts"/></svg>tmp</div>
    <div class="r l2"><i class="x"></i><svg><use href="#db"/></svg>topology</div>
    <div class="r"><i></i><svg viewBox="0 0 16 16"><rect x="1" y="1" width="14" height="14" fill="none" stroke="#334f78" stroke-width="1.500" stroke-dasharray="1.500 1.500"/><path d="M3 3h10v10H3z" fill="#6e98c8"/></svg>SAP HANA</div>
    <div class="r"><i class="x"></i><svg viewBox="0 0 16 16"><path d="M1 1q12-1 14 7l-2 6H5z" fill="#6382a8" stroke="#345"/></svg>MSSQL</div>
   </div>
   <div class="scroll"><b class="up"></b><s class="g1"></s><s class="thumb"></s><s class="g2"></s><b class="down"></b></div>
  </div>
  <div class="split"><i></i></div>
 </section>
 <section class="layers">
  <div class="dhead"><span>Layers</span><svg><use href="#float"/></svg><svg><use href="#shut"/></svg></div>
  <div class="dtools">
   <svg viewBox="0 0 24 24"><path d="M14 10l9-8" stroke="#c68a4a" stroke-width="3.500"/><path d="M0 9l8-4 8 8-6 8z" fill="#f4dc53"/><path d="M0 14l6-3 5 8-4 3z" fill="#e25a50"/><path d="M3 8l7-3 2 3-8 3z" fill="#8fb7e0"/><path d="M10 9l7-1 2 5-7 8z" fill="#d28d49"/></svg>
   <svg viewBox="0 0 24 24"><path d="M2 9h10v12H2zM6 5h10v12M10 2h9v13" fill="none" stroke="#777" stroke-width="1.500"/><path d="M12 16V4q2-3 3 0v14" fill="none" stroke="#456b96" stroke-width="1.500"/><rect x="14" y="15" width="9" height="9" rx="1.500" fill="#5d9b60"/><path d="M18.500 17v5M16 19.500h5" stroke="#fff" stroke-width="1.500"/></svg>
   <svg viewBox="0 0 24 24"><path d="M0 12Q11 2 23 12 11 21 0 12z" fill="#eee" stroke="#aaa" stroke-width="1.500"/><circle cx="12" cy="12" r="5" fill="#6c93bd"/><circle cx="12" cy="12" r="2.200" fill="#234"/><path d="M17 20h7l-3.500 4z" fill="#555"/></svg>
   <svg viewBox="0 0 24 24"><use href="#funnel"/><path d="M17 20h7l-3.500 4z" fill="#555"/></svg>
   <svg viewBox="0 0 24 24"><path d="M11 3Q2 1 4 6q1 2 5 2-7 0-6 4 1 4 9 2" fill="none" stroke="#7a4e86" stroke-width="2"/><path d="M13 12h10v11h-3v-7h-3v7h-4z" fill="#bbb" stroke="#888"/></svg>
   <i class="caret"></i>
   <svg viewBox="0 0 24 24"><use href="#treedown"/></svg><svg viewBox="0 0 24 24"><use href="#treeup"/></svg>
   <svg viewBox="0 0 24 24"><path d="M2 3h18v16H2z" fill="#f2f2f2" stroke="#888" stroke-width="1.600"/><rect x="14" y="15" width="10" height="8" rx="2" fill="#e44747"/><path d="M16 19h6" stroke="#fff" stroke-width="2"/></svg>
  </div>
  <div class="ltree">
   <div class="lr lsel"><i></i><svg class="cb" viewBox="0 0 14 14"><rect x=".5" y=".5" width="13" height="13" fill="#fff" stroke="#b3b3b3"/></svg><svg class="sy" viewBox="0 0 14 14"><circle cx="7" cy="7" r="3.300" fill="#5c8fa8" stroke="#32708f"/></svg><em>correction</em></div>
   <div class="lr"><i></i><svg class="cb"><use href="#ticks"/></svg><svg class="sy" viewBox="0 0 14 14"><circle cx="7" cy="7" r="3.300" fill="#8f4f2a" stroke="#6d3a1d"/></svg><b>antennes</b><span class="fbox"><svg viewBox="0 0 16 16"><path d="M1.500 1.500h13v2L9.500 9v6.500h-3V9l-5-5.500z" fill="#f5f5f5" stroke="#555" stroke-width="1.200"/></svg></span></div>
   <div class="lr"><i class="x"></i><svg class="cb"><use href="#ticks"/></svg><svg class="sy" viewBox="0 0 12 12"><path d="M0 0h12v12H0z" fill="#9db5d2"/><path d="M0 0h4v4H0zM8 0h4v4H8zM4 4h4v4H4zM0 8h4v4H0z" fill="#25364f"/><path d="M4 0h4v4H4zM8 8h4v4H8z" fill="#dce6f2"/></svg><b>OpenStreetMap</b></div>
  </div>
 </section>
</aside>
<div class="vsplit"><i></i></div>
<div class="canvas">
<svg class="map" viewBox="413 165 1506 883">
<rect x="413" y="165" width="1506" height="883" fill="#f2efe9"/>
<g class="sea"><path d="M413 558h388v490H413zM800 838h162v210H800z"/>
<g transform="translate(410 160) scale(.38265 .33333)"><path d="M0 345L30 320 70 308 110 315 85 335 50 345 40 360 25 385 28 400 60 390 110 400 125 375 150 380 165 352 185 350 200 320 220 345 240 352 300 360 370 368 430 368 480 385 520 390 560 405 610 430 635 450 650 458 690 510 720 545 740 560 755 555 770 600 790 618 880 622 895 640 910 665 940 700 965 712 980 740 1000 770 1010 790 1060 800 1120 815 1140 845 1175 865 1200 880 1220 895 1230 930 1215 900 1195 925 1140 925 1150 960 1165 1000 1170 1050 1165 1110 1155 1160 1150 1200H0z"/></g>
<g transform="translate(1000 160) scale(.33333)"><path d="M1500 597L1400 590 1290 550 1225 520 1150 500 1060 510 1050 480 1025 430 965 425 950 410 950 370 960 345 1000 290 1050 250 1120 235 1145 205 1200 180 1280 165 1320 125 1260 115 1180 95 1290 120 1330 100 1370 80 1330 65 1395 60 1430 80 1500 95zM1280 15l25 18 35-18z"/></g>
<g transform="translate(1420 160) scale(.33333)"><path d="M0 540L30 555 140 590 275 600 285 625 275 650 285 690 310 720 330 750 370 780 400 785 410 765 440 780 455 740 440 700 430 650 405 620 470 605 520 580 545 555 548 510 520 470 455 430 500 390 510 370 490 340 495 300 480 290 475 260 520 255 600 265 650 265 690 255 740 280 780 300 830 320 880 325 875 380 900 410 960 435 980 450 1040 430 1060 400 1090 360 1110 350 1130 380 1180 420 1220 460 1260 500 1280 540 1330 580 1400 610 1460 630 1470 655 1500 665V15H0z"/>
<path d="M1500 760L1465 770 1350 825 1250 830 1180 825 1100 825 1020 830 985 860 960 875 900 890 850 950 830 980 870 960 930 915 1000 885 1080 880 1125 890 1125 920 1100 950 1090 990 1130 1000 1140 1040 1080 1065 1010 1085 1000 1110 960 1110 900 1130 860 1140 830 1170 830 1190 860 1210 870 1245 820 1250 760 1265 690 1285 675 1320 660 1350H1500z"/></g>
<g transform="translate(800 440) scale(.35714 .33333)"><path d="M130 85L150 100 158 150 165 190 160 230 158 280 150 320 140 350 145 380 155 400 160 430 170 480 190 530 200 570 235 610 255 640 275 680 300 710 305 735 340 738 385 755 430 785 460 800 470 830 490 870 515 905 550 945 580 985 592 1020 585 1038 555 1035 550 1050 588 1070 635 1105 672 1125 686 1150 686 1180 700 1200H0V85z"/></g>
<g transform="translate(960 700) scale(.33333)"><path d="M0 20L30 45 50 90 70 130 100 170 130 195 155 240 150 262 115 262 110 270 150 290 200 325 240 345 255 370 255 400 285 430 310 450 340 470 350 495 370 498 380 480 370 450 345 430 320 380 295 350 285 320 260 290 230 260 225 245 190 200 150 150 130 110 125 85 150 95 180 95 205 105 210 130 230 160 240 190 235 225 290 245 330 290 370 320 385 345 400 380 440 400 480 430 510 470 545 510 555 540 570 575 575 600 560 620 580 655 620 680 660 715 720 735 760 760 810 785 870 800 910 815 950 835 990 845 1040 830 1080 825 1120 835 1160 870 1190 890 1230 925 1290 940 1350 950 1400 960 1430 990 1460 1020 1480 1045H0z"/>
<path d="M1560 185L1520 180 1500 150 1450 150 1400 155 1370 145 1360 165 1335 165 1345 195 1320 210 1300 195 1260 200 1230 182 1180 185 1130 180 1100 180 1060 205 1020 230 975 255 950 285 945 310 960 350 955 380 940 410 930 460 925 500 935 545 950 590 975 620 990 650 1010 680 1050 695 1080 715 1120 710 1170 705 1210 705 1250 680 1265 650 1270 610 1290 585 1340 575 1400 565 1440 570 1445 600 1430 640 1405 655 1415 690 1375 720 1380 760 1375 800 1345 835 1380 840 1430 840 1480 830 1560 835z"/></g>
<g transform="translate(1340 540) scale(.3699 .33333)"><path d="M1020 0L985 15 965 35 960 60 985 80 1000 100 960 100 915 115 860 130 825 145 800 195 780 225 770 260 750 290 740 330 735 350 755 370 740 400 700 420 660 460 630 465 600 490 560 520 525 555 510 590 515 640 535 690 550 730 557 780 558 830 550 870 520 878 505 850 470 810 445 760 445 720 440 690 420 670 400 650 370 655 340 665 310 645 280 635 240 640 200 640 190 665 150 675 100 670 50 665 0 660V1185L60 1175 100 1150 115 1110 120 1075 160 1050 230 1045 265 1045 275 1070 255 1110 240 1150 245 1180 225 1210 225 1250 210 1290 195 1320 230 1315 280 1315 330 1305 390 1325 430 1350 415 1390 420 1440 410 1490 400 1524H1568V0z"/><path d="M770 260L720 200 715 250 745 270 700 262 740 290z"/></g>
</g>
<g class="land">
<g transform="translate(410 160) scale(.38265 .33333)"><path d="M985 803L1030 800 1060 815 1120 835 1160 870 1190 890 1200 915 1130 900 1060 860 1000 825zM795 642h65l-8 40-22 12zM825 690l60 60-15 0-45-45z"/></g>
<g transform="translate(1420 160) scale(.33333)"><path d="M0 15H330L310 45 240 60 190 40 170 55 215 80 220 100 150 75 110 60 60 80 0 60zM0 120l60 5-20 30-40 20zM95 110L130 90 150 110 200 130 280 150 300 175 375 190 350 205 270 195 230 190 190 215 120 220 115 200 50 195 90 165zM200 250l30-15 65-5-15 20-65 15zM375 270l35-13 8 18-23 18zM455 208l40 0 10 10-30 2zM480 183h25M515 200l30 8-25-12zM930 350l15-10 15 10-20 10zM1070 295h35v12zM285 700l60-10 10 25zM520 15h95l-10 15-60-5z"/>
<path d="M750 15L720 45 645 80 690 110 640 125 540 115 480 130 475 150 500 165 620 160 680 180 730 190 760 215 830 230 890 240 960 260 1040 280 1050 275 980 240 900 205 930 195 1000 230 1080 250 1130 255 1115 235 1080 205 1140 200 1130 170 1060 150 1010 110 960 75 1050 95 1160 135 1180 110 1240 90 1265 55 1180 25 1160 15z"/>
<path d="M1120 990L1160 1010 1230 1015 1200 1035 1140 1020zM1500 770L1480 780 1440 830 1400 900 1360 945 1400 955 1500 960zM1300 1000l25-20 15 30z"/></g>
<g transform="translate(1340 540) scale(.3699 .33333)"><path d="M355 1030L380 1000 400 980 460 970 530 975 600 1000 650 1030 690 1050 740 1075 790 1090 820 1110 780 1120 660 1120 690 1095 640 1080 625 1045 560 1035 530 1015 470 1005 440 990 400 1010zM430 1035l25-5-5 15zM835 1130L870 1115 930 1125 990 1135 1050 1170 1060 1190 1000 1195 950 1205 930 1230 915 1195 850 1200 800 1190 820 1180 880 1180 870 1150 835 1140zM635 1190L690 1190 730 1215 700 1225 650 1215zM1105 1190L1180 1190 1175 1212 1110 1210zM640 880L655 890 665 940 640 920zM860 1524L900 1480 940 1475 935 1500 910 1524zM975 1524L980 1490 998 1490 1003 1524zM1365 1360l12 10 5 20zM1340 1290l8-8 0 25z"/><path d="M610 805q30-5 45 0M675 810l12 15-5 12M720 880l12 30M750 920l10 25M775 960l30 30M820 995l-15 15M855 1005l20 10" fill="none" stroke="#f2efe9" stroke-width="3"/></g>
</g>
<g class="green">
<g transform="translate(410 160) scale(.38265 .33333)"><path d="M1000 372H1355V405H1415V415H1250V440H1232V490H1335V605H1380L1568 590V888H1370L1330 860V888H1210V845H1170V770H1200V700H1170V650H1130V512H1210V465H1150L1090 415H1040V390H1000zM530 276H658V330L600 335 560 310zM700 265H820V275H700zM760 300H820V350H740V320zM820 285H945V300H965V350H1020V372H960L965 400 930 410V370H900L870 390H820V360H930V320H860zM1060 275L1180 290V278H1235V285H1290L1335 300V320H1210V370H1170V325H1110L1040 310zM1460 300h108v15h-60v20h-50zM635 225H655V215H675V235H655V250H690V262H640zM676 192h22v12h-22zM1395 245h20v30h-20zM940 540L985 570H1015V600H1045V620H1165V650H1115L1040 640 985 610V580H950zM795 642h62l-8 40-22 12zM1110 715h25l35 30-30 5-30-10zM1070 860l50 5 70 30-5 25-60-20zM285 235l15 20 25 15-5 25-15 15-15-20z"/><path d="M225 270h60v5h-60zM230 163h30v6h-30z"/></g>
<g transform="translate(1000 160) scale(.33333)"><path d="M0 582H84V610L60 640 0 690zM138 572h45v-22h48v55h-93zM233 630H563V655L530 670 400 680 300 670 233 665zM397 370h118v46h-118zM535 705L570 675 655 675V730L600 740zM610 528H635V513H702V525H726V557H680V535H610zM727 558H822V572H845V548H962V475H985V510H1080V520H1010V530H985V555H935V570H845V590H822V640H705V605H750V595H775V570H727zM20 350H45V360H110V370H138V405H92L68 375zM962 432h48v15h-48zM915 643h20v8h28v12h-48zM890 784h25v10h-25zM1082 665h22v20h-22zM1010 795h48v30l70 15v15h50v25h90v8H1130l-20-30-80-5-100 10v-40l80-5zM875 820h55v68h-60l20-30zM630 745l50-15 20 30-20 25-40-5zM650 795h70v20l-30-5z"/></g>
<g transform="translate(1420 160) scale(.33333)"><path d="M10 748H105V795H150V785H197V795H387V1010H175L150 940 100 930 60 900 10 880zM457 785H480V795H503V875H550V855H575V820H600V808H670V855H715V865H762V797H858V877H905L880 905 820 980 720 1040 640 1065 540 1050 500 1030 440 1010 420 985V912H480V880L457 865zM762 715h95v32h-95zM1045 725h95v22h-95zM670 655h70v10h-70zM882 808H975V820H1095V808H1118V820L1230 825 1305 808H1352V772L1460 772 1350 820 1250 832 1100 825 1000 840 985 860 905 880V820zM850 970L930 915 1000 885 1080 880 1125 890 1125 920 1100 950 1090 1000 1140 1040 1060 1070 1000 1080 960 1050V970L900 960 850 1020 830 1050zM355 1040L500 1030 560 1060 620 1080 570 1105 500 1100 400 1095zM1030 1140L1050 1100 1100 1085 1160 1060 1220 1050 1180 1085 1110 1120 1070 1150zM1260 1035l20-30 30-25v40l-40 20zM1115 845l65 5 60 35-60-10zM895 775l25-12 20 12-20 12zM705 1080h25v80h-15zM450 1245h70v50l-60 10zM620 1260l40-5-10 45z"/></g>
<g transform="translate(800 440) scale(.35714 .33333)"><path d="M165 235l60-5 15 20-20 30-10 40-15 40-20-20 5-60zM262 320l20-30 25 5-10 25zM930 430l40-5 10 20 20 30-10 35-30-20zM670 620l15-5 10 50-15 0zM680 690h30v8h-30zM870 740h35v15l-30 5zM730 255h35v10h-35zM590 585l60 10-10 20-40-20zM250 625l40 20 20 40-30-10z" opacity=".85"/><path d="M440 500l5 30M462 490l5 45M485 480l8 30M520 470l5 50M540 460l5 50M590 500l-5 60" fill="none" stroke="#c8ddb3" stroke-width="5"/><path d="M562 460l8 20 10-20 2 60 6 20-12 50-14-40 4-30z" fill="#d3dfb0"/><path d="M308 295l35 10v40h-30z" fill="#dfe0b2"/></g>
<g transform="translate(960 700) scale(.33333)"><path d="M820 330l15 40 10 60-10 30-20-50zM610 615l40 5-20 15-20-5zM1230 790l30 5-10 25-20-10zM1335 740l25-5-5 50-20 30zM1530 890l30-10v30l-30 25-20-5zM235 205h12v18h-10zM840 565l30 10-10 40-20-10zM780 650l30 10-10 20z"/><path d="M125 60l20 0 35 20-15 15-30-10-15-20z" fill="#f8ecd0"/></g>
<g transform="translate(1340 540) scale(.3699 .33333)"><path d="M620 105l65 0 5 25 0 30-50 10-20-20zM465 260l30-8 30 15-5 35-25 5-25-15zM395 385l35-15-5 15zM775 115l30-5-10 30-20-5zM45 270l40-10 25 20-5 25-25 5zM350 1020l50-30 10 10-30 25zM470 985l80 10 20 15-60 0zM640 1040l100 45 70 20-140 10 30-20-50-20zM345 1380l30-15-10 30-30 20zM385 1490h25v30h-25z"/><path d="M510 820l45-5-5 40-40-15z" fill="#d8eebb"/></g>
</g>
<g class="land"><g transform="translate(410 160) scale(.38265 .33333)"><path d="M1375 795h80v60h-80zM1170 705h65l45 40v50h-35l-40-30h-35zM1540 660h28v150l-20-40-20-60z"/></g>
<g transform="translate(1420 160) scale(.33333)"><path d="M432 940h95v45h-95zM528 890h22v28h-22zM528 960h22v48h-22zM470 880h32v22h-32z"/></g></g>
<g class="sea">
<g transform="translate(410 160) scale(.38265 .33333)"><path d="M1125 80L1230 68 1300 45 1365 40 1350 60 1430 55 1410 85 1390 100 1350 105 1330 125 1270 140 1300 110 1250 110 1240 130 1195 130 1230 110 1270 90 1180 82zM1470 315L1520 285 1568 285V328H1510zM1395 205l25 0 20 15-40 2z"/><path d="M640 445l50 20 15 60 40 40M700 380l20 60 5 50 15 70M650 425l50-8 40 12M720 410l25 50 30 40M735 510l30-15 30 10 30-30M650 450l40 60 70 10M760 540l30 15 40-25 40 20M830 560l10 25-15 40M780 560l30 20 15 40M860 540l20 40 30 5M890 630l30 40 50 20 10 40M910 650l40 0 30 20M950 700l50 20M1010 780l20-30M1120 815l20-25M1060 800l-30-40" class="fj"/></g>
<g transform="translate(1000 160) scale(.33333)"><path d="M0 285L70 280 110 260 160 250 200 235 285 240 200 250 160 270 110 300 60 310 40 325 0 328zM190 425L220 400 270 390 370 400 300 410 230 415zM750 662L800 665 820 700 850 750 875 800 880 820 850 825 845 780 800 750 770 710 745 690zM760 790l20 10 20 30-25 0zM690 690l25 10-5 40-20 10zM575 500l30-40 20 30-60 50zM610 215l30-10 20 15-20 20zM535 450l30-15 0 20-30 10zM115 430h30l0 15zM890 168l80 8-60 4zM1225 835l25-5 15 20-20 20-20-10zM460 592h25v12h-20z"/><path d="M1070 1000L1120 960 1190 930 1250 900 1340 905 1370 935 1420 945 1430 1005 1330 1005 1280 985 1240 965 1200 995 1130 990z"/></g>
<g transform="translate(1420 160) scale(.33333)"><path d="M20 1230V1130L50 1060 110 1035 170 1030 100 1060 80 1090 95 1150 90 1210 70 1235 40 1235zM165 1015L250 1020 330 1040 390 1085 330 1090 300 1120 290 1165 275 1165 265 1130 200 1135 220 1090 250 1060 200 1030zM235 1230L310 1190 430 1180 340 1205 270 1235zM430 1145L480 1125 565 1125 560 1145 480 1160 435 1160zM630 545h35l0 12zM1100 630l40 30-70-5zM670 810l50-30-30 30zM1325 672l80-20-60 25z"/></g>
<g transform="translate(800 440) scale(.35714 .33333)"><path d="M650 395l30 20 5 20-20-5zM515 780l10 15 5 0zM333 510h8v12h-8z"/></g>
</g>
<g id="specks"></g>
<g class="bd">
<g transform="translate(410 160) scale(.38265 .33333)"><path class="nat" d="M471 15V355H545L620 420 655 400 700 380 780 440 840 525 920 555 920 590 895 622H770M1205 889H1568"/><path d="M545 370H1568M1334 372V660L1400 720 1480 770 1568 860M670 15v25H765L780 80 830 100 815 130 850 160 890 170 930 220 1000 295 1050 330 1145 325 1170 370"/><path class="dash" d="M1385 15L1568 75"/></g>
<g transform="translate(1000 160) scale(.33333)"><path class="nat" d="M0 889H932V870L950 900 1020 910 1190 938 1250 920 1420 990 1500 1045"/><path d="M0 370H948M232 370V888M610 168V570L640 888M932 870V708L1220 520M1080 1000l100-30 20-40M1050 1000q-30 60 60 110l20 90M1160 1010l130 50"/><path class="dash" d="M0 70L230 140 610 168"/></g>
<g transform="translate(1420 160) scale(.33333)"><path class="nat" d="M0 925L160 1000 265 1060 285 1130 270 1200 240 1220 270 1235 430 1180 430 1145 540 1140 625 1078 805 1075 845 1030 900 965 960 975 965 1050 1000 1080 980 1110"/><path d="M410 765V970L450 1010 540 1040M700 1080L705 1200 690 1285M805 1075L770 1130 740 1185M805 1075l15 100M1110 350l-5 60 50 30-10 60 10 80-40 30-100-20-40 60 30 50 80 70 100-20h320v30M32 1230h130v120M160 1232h100M360 1205v120M396 1190v28h210l30 40M362 1327h200M692 1215h80M930 940l100-5 70 10M1100 960l70 0 50 30h70l50-60M475 260l15 80M455 430q100 50 93 110"/></g>
<g transform="translate(800 440) scale(.35714 .33333)"><path class="nat" d="M205 49H1430M465 825L560 820 730 883H855V862H935L1010 940 1080 995 1110 955 1160 955 1210 1040 1250 1110 1350 1130"/><path d="M1040 50V428M1040 193H1375M1040 330H1270L1365 350M730 238H1040M730 238V428H1127V616M470 50V190L490 205 460 270 468 290V380M160 180L210 185 250 212 380 190H470M512 50V110L585 160 580 210 605 205 650 265 730 255M150 380H732M338 380V520L570 700 590 750 570 820M598 380V680M598 616H1455M820 428V883M1127 475H1420M1085 616V850H928V862M1085 640H1217V730L1300 765 1370 760 1460 775M1340 50L1360 120 1357 200 1372 220 1370 340 1400 440 1455 515V616L1460 775 1478 780V850L1500 900 1490 965M1410 448H1568M1455 640H1568M1480 803H1568M830 883L840 960 820 1030 845 1060 840 1090 900 1110 900 1140 950 1160 970 1110 1045 1110 1045 1040 1080 995M598 1040h60"/></g>
<g transform="translate(960 700) scale(.33333)"><path d="M490 360L520 430 550 500 600 530 620 480 670 430 650 380 650 320M700 400l80 0 0 100 80 30 60-10M780 350l0-50 30-25 40 50 40 60-30 30-20 50-30 50M560 520l60 70 50-20 50-60 50 20 60 10 40 40-10 60 30 50M580 600l60 0 30 30 60-20 70 20 40 50M720 740l20-30 80 0 60 40 10 60M870 710l60 30 80-10 60 40 60 0 40-40 40-30M1270 620l60 40 60-60M1335 660v80h-90M1160 730l60 40 50 40-70 20-20 60M1370 830l60 60 20 50 60-50 50-20M1250 850l60 40 60 50M1200 880l60 20 30-60 60-10M1300 930l40-40 50 50"/></g>
<g transform="translate(1340 540) scale(.3699 .33333)"><path d="M130 52h110M90 0l15 50-10 60 40 90 80 120 0 60-70 100M245 92v130l-30 55 60-20 90-30 60 10 50-40 40-60M361 92v125M575 75h200l30 60M542 185h240M0 340h140l20 60-60 70-20 160M0 505h92M160 340l560 0M225 332l200 0 80-60 70-50 60-50M160 410h260l180 50M218 430l-10 205M325 412l30 130-5 60 120 15M430 410l60 80 60 50M520 380l80-40M835 100v90M850 1120l60 20 10 60M960 1140l10 60M1000 1140l-20 60M500 970l10 50M590 1000l20 40M700 1060l-20 60"/></g>
</g>
<g class="mar">
<g transform="translate(410 160) scale(.38265 .33333)"><path d="M0 500L25 495 30 470 45 450 30 430 100 408 140 385 190 385 250 362 310 368 315 388 370 378 480 385 580 420 650 470 670 510 720 550 755 580 770 620M785 635H865L880 670 870 700 898 745 880 758 830 730 790 680zM870 622L920 690 990 750 1000 785 950 795 955 808 1000 840 1060 880 1130 912 1130 930 1150 980 1158 1060 1150 1140 1135 1180 1140 1200M240 385h25l8 12-10 10h-25z"/></g>
<g transform="translate(1000 160) scale(.33333)"><path d="M948 370v45l15 13h62l20 40 20 32M1060 510L1150 500 1225 520 1290 552 1400 592 1500 597"/></g>
<g transform="translate(1420 160) scale(.33333)"><path d="M1195 15L1290 50 1250 105 1145 170 1175 240 1130 290 1135 350 1190 410 1280 480 1305 540 1370 580 1460 615 1490 610 1490 645M1500 970L1410 965 1330 975 1330 1005 1355 1025 1290 1065 1170 1120 1070 1160 1020 1110 960 1125 850 1150 835 1200 870 1210 870 1255 800 1265 690 1295 680 1350M1307 1125l20-10 30 5-5 15-35 3zM1500 1000l-12-10v-15M0 540l140 50 135 10M430 650l25 90-15 40M475 260l175 5 35-8 100 45 90 25"/></g>
<g transform="translate(800 440) scale(.35714 .33333)"><path d="M118 72L128 110 145 140 152 200 148 280 125 340 130 400 150 470 165 530 190 580 230 630 270 690 300 750 340 765 345 800 370 800 400 820 425 815 440 790 470 830 480 880 512 920 520 960 580 1000 588 1030 560 1038 550 1018 525 1020 525 1035 580 1085 650 1130 672 1200M400 980l12-5 12 12-5 22h-12l-8-12z"/></g>
<g transform="translate(960 700) scale(.33333)"><path d="M100 275L170 320 240 355 235 410 270 440 310 460 345 510 375 505 390 480 370 430 330 370 310 320 260 260 230 235 250 225M250 225L310 280 370 325 385 365 430 410 480 440 540 520 530 550 575 580 550 600 555 640 600 675 650 725 730 745 790 780 860 805 920 835 990 852 1060 830 1110 840 1160 880 1210 920 1290 935 1390 965 1440 1020 1460 1045M1560 190L1530 190 1500 165 1440 155 1360 170 1350 205 1320 222 1300 208 1230 203 1120 187 1080 200 970 265 955 300 965 370 935 460 938 520 960 580 1010 670 1050 695 1090 720 1150 710 1220 690 1260 650 1275 600 1310 565 1360 555 1430 560 1455 580 1450 610 1425 640 1425 690 1410 720 1420 770 1380 830 1490 795 1560 825M500 545l15 0 25 30-10 10-20-15z"/><circle cx="81" cy="404" r="11"/><circle cx="130" cy="715" r="12"/><circle cx="255" cy="685" r="10"/><circle cx="307" cy="693" r="14"/><circle cx="314" cy="668" r="9"/><circle cx="1229" cy="538" r="11"/><circle cx="1307" cy="521" r="13"/><circle cx="1188" cy="594" r="12"/><circle cx="1202" cy="629" r="11"/></g>
<g transform="translate(1340 540) scale(.3699 .33333)"><path d="M1040 0L970 20 985 60 1000 80 1000 120 940 118 830 150 815 205 780 250 748 320 765 370 760 405 700 430 660 475 620 470 560 540 520 580 520 640 550 730 575 800 570 870 530 910 470 910 465 895 510 880 480 830 435 760 435 700 390 660 340 670 300 640 200 650M595 780L630 767 690 790 750 885 810 915 885 1010 850 1085 690 1030 600 975 540 945 545 920 590 870zM345 1030L380 985 460 962 550 955 620 980 700 1035 820 1100 810 1125 690 1135 640 1115 580 1055 480 1060 430 1055zM885 1015L980 1060 1050 1110 1070 1190 1055 1215 985 1210 920 1245 910 1215 820 1215 795 1190 830 1170 860 1170 835 1140 850 1110 905 1115 940 1070M625 1190L660 1183 730 1200 745 1245 635 1280zM1095 1200l15-20 90 0 25 25-15 30-15-15-90 5zM1330 1290l25-15 25 20-15 30-20-5-15-20zM1350 1370l20-20 20 30-10 20-25-15zM1345 1450l25-60 15 20-20 90-25-10zM1265 1225l30-10 10 30-25 5zM1145 10l25 15 30-8 10-17M250 1310L320 1275 420 1310 470 1345 460 1370 460 1420 430 1500 440 1524M800 1524L920 1468 940 1475M940 1470l25 15 25-25 10 15M1015 1470l50 0 10 25-30 10zM1075 1485l110 5 90 20 40 15M475 1480l15-20 20 10-5 20-15 5z"/><ellipse cx="442" cy="900" rx="11" ry="11"/><ellipse cx="510" cy="1150" rx="14" ry="12"/><circle cx="398" cy="1241" r="10"/><circle cx="570" cy="1317" r="9"/><circle cx="623" cy="1314" r="9"/><circle cx="1259" cy="1323" r="10"/><circle cx="776" cy="1194" r="10"/><circle cx="1077" cy="1206" r="12"/><ellipse cx="516" cy="1388" rx="9" ry="17"/><ellipse cx="555" cy="1385" rx="10" ry="14"/><ellipse cx="507" cy="1428" rx="10" ry="14"/><ellipse cx="562" cy="1425" rx="9" ry="14"/><circle cx="1227" cy="1180" r="11"/><circle cx="1267" cy="1188" r="12"/><circle cx="1435" cy="1441" r="12"/><circle cx="425" cy="1310" r="13"/><circle cx="461" cy="1315" r="10"/></g>
</g>
<g id="labels"></g>
<g class="ant"><circle cx="1165" cy="584" r="3.800"/><circle cx="1164" cy="602" r="3.800"/><circle cx="1108" cy="613" r="3.800"/><circle cx="1201" cy="609" r="3.800"/><circle cx="1167" cy="617" r="3.800"/><circle cx="1170" cy="626" r="3.800"/><circle cx="1150" cy="638" r="3.800"/></g>
</svg>
</div>
</div>

<footer class="status">
 <div class="locator"><svg viewBox="0 0 16 16"><circle cx="6.500" cy="6.500" r="4.700" fill="none" stroke="#888" stroke-width="1.300"/><path d="M10 10l5 5" stroke="#888" stroke-width="1.600"/></svg><span>Type to locate (Ctrl+K)</span></div>
 <span class="lb coord">Coordinate</span><div class="in i1">-129,83 48,48</div>
 <svg class="ext" viewBox="0 0 16 16"><path d="M2 2l5 11M5 1l6 12M3 9l9-5M14 1L6 14" stroke="#333" stroke-width="1.700"/><circle cx="10" cy="11" r="3.500" fill="#ddd" stroke="#333" stroke-width="1.500"/></svg>
 <span class="lb scale">Scale</span><div class="in i2">1:15000000<b class="dd"><i class="caret"></i></b></div>
 <svg class="lock" viewBox="0 0 14 16"><path d="M3 8V4q0-3 4-3t4 3v4" fill="none" stroke="#8a8a8a" stroke-width="1.800"/><rect x="1" y="7" width="12" height="9" rx="1.500" fill="#666"/></svg>
 <span class="lb magn">Magnifier</span><div class="in i3">100%<b class="sp"><i></i><i></i></b></div>
 <span class="lb rot">Rotation</span><div class="in i4">0,0 °<b class="sp"><i></i><i></i></b></div>
 <svg class="rcb"><use href="#ticks"/></svg><span class="lb rend">Render</span>
 <svg class="globe" viewBox="0 0 16 16"><path d="M5 1h6l4 7-4 7H5L1 8zM1 8h14M8 1v14M3 4.500h10M3 11.500h10M8 1Q1 8 8 15M8 1q7 7 0 14" fill="none" stroke="#666" stroke-width="1.100"/></svg><span class="lb epsg">EPSG:4326</span>
 <svg class="msg" viewBox="0 0 16 16"><path d="M8 1q7 0 7 6t-7 6l-2 3v-3q-5-1-5-6 0-6 7-6z" fill="#666"/><path d="M4 7h2M7 7h2M10 7h2" stroke="#fff" stroke-width="2"/></svg>
</footer>
</main>
</div>
<script src="map.js"></script>
</body>
</html>
```
FILE: styles.css
```css
*{box-sizing:border-box}
body{margin:0;width:1920px;height:1080px;overflow:hidden;font:14.67px/19px "Noto Sans","Open Sans",sans-serif;color:#000;background:#efefef}
svg{display:block;flex:none}
svg text{font-family:"Noto Sans",sans-serif}
.defs{position:absolute}
.topbar{height:27px;background:#1d1d1d;color:#e6e6e6;display:flex;align-items:center;padding-left:12px;white-space:nowrap}
.activities{width:96px}
.appname{font-size:14.2px;width:93px;margin-left:6px}
.qmono{width:17px;height:17px}
.clock{margin-left:707px;width:110px;font-size:14px}
.tray{margin-left:708px;width:144px;height:27px}
.caret{display:block;width:0;height:0;border:5px solid transparent;border-top:5px solid #555;border-bottom:0}
.caret.light{border-top-color:#e6e6e6;margin-left:5px;margin-right:3px}
.desktop{display:flex;height:1053px}
.dock{width:72px;flex:none;background:linear-gradient(#4a2020,#3c1a28 20%,#2e1529 55%,#24141f 80%,#20141c);padding-top:2px;display:flex;flex-direction:column}
.app{height:68px;width:64px;margin-left:4px;display:flex;align-items:center;justify-content:center;position:relative}
.app svg{width:48px;height:48px}
.app.active::after{content:"";position:absolute;inset:2px 0;border-radius:4px;background:rgba(255,255,255,.17);z-index:0}
.app.active svg{position:relative;z-index:1}
.app.run::before{content:"";position:absolute;left:0;top:31px;width:6px;height:6px;border-radius:3px;background:#e95420;z-index:2}
.grid9{width:30px;height:30px;margin:186px 0 0 21px}
.window{width:1848px;display:flex;flex-direction:column}
.titlebar{height:37px;background:#332f30;border-bottom:1px solid #1d1b1b;color:#fff;display:flex;align-items:center;padding-left:833px;padding-right:2px;font-size:14.600px;justify-content:space-between}
.titlebar svg{width:94px;height:36px}
.menubar{height:22px;background:#efefef;border-bottom:1px solid #d0d0d0;display:grid;grid-template-columns:62px 42px 48px 51px 70.500px 64.500px 58.500px 57.500px 78px 46px 51px 88px 50px;padding-left:10px;align-items:center;line-height:21px}
.menubar u{text-underline-offset:2px}
.toolbar{height:39px;border-bottom:1px solid #b4b4b4;background:linear-gradient(#fafafa,#eee);display:flex;align-items:center}
.toolbar.two{height:39px;border-bottom-width:2px}
.c{width:33px;height:31px;display:flex;align-items:center;justify-content:center;flex:none}
.c svg{width:24px;height:24px}
.pressed{background:#dcdcdc;border:1px solid #b0b0b0;border-radius:3px}
.off svg,i.off{opacity:.32}
.dim svg{opacity:.8}
.grip{width:16px;height:20px;flex:none;background:radial-gradient(circle,#bbb .8px,transparent 1px) 0 0/3px 3px;background-clip:content-box;padding:0 5px}
.grip.first{width:12.500px;padding:0 4px}
.w20{width:20px;padding:0 7px}
.g14{width:14px;padding:0 4px}
.a{width:12px;height:5px;flex:none;background:#555;clip-path:polygon(1px 0,9px 0,5px 5px)}
.bar{width:1px;height:24px;background:#cfcfcf;margin:0 3px;flex:none}
.bar.b5{margin:0 2px 0 3px}
.work{display:flex;height:885px}
.docks{width:334px;flex:none}
.browser{height:366px}
.dhead{display:flex;align-items:center;height:19px;padding:0 2px 1px 4px;gap:2px}
.dhead span{flex:1}
.dhead svg{width:12px;height:12px}
.dtools{display:flex;align-items:center;height:31px;padding:0 0 2px 8px;gap:9px}
.dtools svg{width:16px;height:16px}
.dtools .caret{margin:0 -2px 0 -5px}
.tree{height:314px;border:1px solid #b4b4b4;background:#fff;display:flex;overflow:hidden}
.rows{flex:1}
.r{height:19px;display:flex;align-items:center;padding-left:3px;white-space:nowrap}
.r>i,.lr>i{width:10px;height:19px;flex:none;margin-right:6px;position:relative}
.r>svg{width:16px;height:16px;margin-right:6px}
.l1{padding-left:19px}.l2{padding-left:35px}.l3{padding-left:51px}
.x::before{content:"";position:absolute;left:3px;top:5px;border:4px solid transparent;border-left:4.500px solid #555;border-right:0}
.o::before{content:"";position:absolute;left:1px;top:7px;border:4px solid transparent;border-top:4.500px solid #666;border-bottom:0}
.sel{background:#308cc6;color:#fff;width:233px}
.scroll{width:14px;border-left:1px solid #b4b4b4;display:flex;flex-direction:column}
.scroll b{height:13px;background:#fafafa;position:relative}
.scroll .g1{height:20px;background:#e3e3e3;border:1px solid #b8b8b8;border-width:1px 0}
.scroll .thumb{height:162px;background:#f9f9f9;border-bottom:1px solid #b8b8b8}
.scroll .g2{flex:1;background:#e3e3e3;border-bottom:1px solid #b8b8b8}
.up::before,.down::before{content:"";position:absolute;left:3px;top:5px;border:4px solid transparent;border-bottom:4px solid #555;border-top:0}
.down::before{border:4px solid transparent;border-top:4px solid #555;border-bottom:0}
.split{height:2px;display:flex;justify-content:center;padding-top:1px}
.split i{width:17px;height:3px;flex:none;background:radial-gradient(circle,#aaa .7px,transparent 1px) 0 0/3px 3px}
.layers{height:519px}
.layers .dhead{height:23px}
.layers .dtools{height:29px}
.ltree{height:467px;border:1px solid #b4b4b4;background:#fff}
.lr{height:19px;display:flex;align-items:center;padding-left:5px;font-size:14.500px}
.lr>i{margin-right:8px}
.lr .cb{width:14px;height:14px;margin-right:7px}
.lr .sy{width:14px;height:13px;margin-right:7px}
.lsel{background:#308cc6;color:#f4f9fd;font-weight:700}
.lsel em{text-decoration:underline;text-underline-offset:2px;font-size:14.700px}
.fbox{margin-left:auto;margin-right:5px;width:18px;height:18px;background:#efefef;display:grid;place-items:center}
.fbox svg{width:14px;height:14px}
.vsplit{width:6px;padding:436px 1px 0 2px}
.vsplit i{display:block;height:17px;width:3px;background:radial-gradient(circle,#aaa .7px,transparent 1px) 0 0/3px 3px}
.canvas{flex:1;border:1px solid #b4b4b4;overflow:hidden}
.map{width:1506px;height:883px}
.sea{fill:#aad3df}
.sea .fj{fill:none;stroke:#aad3df;stroke-width:5;stroke-linejoin:round}
.land{fill:#f2efe9}
.green{fill:#c0dcb4}
.bd path{fill:none;stroke:#d5c3d1;stroke-width:1px;vector-effect:non-scaling-stroke}
.bd .nat{stroke:#c2a9c6;stroke-width:1.200px}
.bd .dash{stroke-dasharray:4 3}
.mar path,.mar circle,.mar ellipse{fill:none;stroke:#9a96b8;stroke-width:1px;vector-effect:non-scaling-stroke}
#labels text{text-anchor:middle;paint-order:stroke;stroke:rgba(255,255,255,.6);stroke-width:5px;stroke-linejoin:round}
#labels .city{fill:#333;font-weight:500}
#labels .state{fill:#85588a;font-style:italic}
#labels .country{fill:#7d5488}
#labels .water{fill:#4a7fb5;font-style:italic;stroke:none}
.ant circle{fill:#8c4c28;stroke:#2b211c;stroke-width:1px}
.status{height:31px;display:flex;align-items:center;font-size:11.700px;padding:0 0 1px 4px;line-height:16px}
.locator{width:268px;height:25px;border:1px solid #a8a8a8;border-radius:2px;background:#fff;color:#777;display:flex;align-items:center;padding-left:8px;gap:7px;font-size:13.700px;margin-top:1px}
.locator svg{width:13px;height:13px}
.lb{white-space:nowrap;flex:none}
.coord{width:65px;margin-left:707px}
.in{height:24px;background:#fff;border:1px solid #aaa;border-radius:2px;display:flex;align-items:center;white-space:nowrap;flex:none}
.i1{width:91px;padding-left:8px}
.ext{width:15px;height:15px;margin-left:4px}
.scale{width:32px;margin-left:15px}
.i2{width:96px;padding-left:4px}
.dd{margin-left:auto;width:20px;height:22px;border-left:1px solid #bbb;display:grid;place-items:center}
.lock{width:13px;height:15px;margin-left:12px}
.magn{width:56px;margin-left:9px}
.i3{width:97px;padding-left:5px}
.rot{width:56px;margin-left:10px}
.i4{width:93px;padding-left:5px}
.sp{margin-left:auto;width:14px;height:22px;border-left:1px solid #bbb;display:flex;flex-direction:column;justify-content:space-evenly;align-items:center}
.sp i{border:4px solid transparent;border-bottom:4px solid #555;border-top:0}
.sp i+i{border:4px solid transparent;border-top:4px solid #555;border-bottom:0}
.rcb{width:14px;height:14px;margin-left:7px}
.rend{width:40px;margin-left:5px}
.globe{width:15px;height:15px;margin-left:15px}
.epsg{width:60px;margin-left:3px}
.msg{width:16px;height:16px;margin-left:21px}
```
FILE: map.js
```js
const NS = "http://www.w3.org/2000/svg";
const sheets = {
  nw: "translate(410 160) scale(.38265 .33333)",
  mid: "translate(1000 160) scale(.33333)",
  ne: "translate(1420 160) scale(.33333)",
  us: "translate(800 440) scale(.35714 .33333)",
  mx: "translate(960 700) scale(.33333)",
  at: "translate(1340 540) scale(.3699 .33333)"
};
// Each label: text | centre x | baseline y | width
const labels = {
  nw: {
    state: "Yukon|648|121|48;Alaska|24|207|36;British Columbia|1105|635|134;Washington|1306|975|94;Oregon|1311|1122|60;Idaho|1519|1055|48",
    city: "Vancouver|1110|857|84;Island|1108|874|50;Vancouver|1206|872|96;Seattle|1238|950|66;Portland|1224|1071|80;Boise|1490|1137|50",
    water: "Great|1342|83|48;Bear Lake|1342|102|80;Hecate|895|692|54;Strait|895|709|44"
  },
  mid: {
    state: "Alberta|4|619|54;Saskatchewan|424|615|124;Manitoba|846|617|90;Ontario|1300|853|70;Montana|264|1001|84;North Dakota|684|966|124;South Dakota|692|1120|124;Minnesota|962|1011|96;Wisconsin|1190|1085|90;Wyoming|347|1176|86;Michigan|1437|1078|86",
    city: "Edmonton|68|670|110;Calgary|42|788|80;Regina|486|815|74;Winnipeg|839|865|100;Saint Paul|1030|1074|106;Milwaukee|1274|1164|116;Southampton|1450|150|120;Island|1450|168|60",
    water: "Great|40|267|56;Slave|40|284|50;Lake|40|301|46;Hudson Bay|1358|333|166;Lake Superior|1256|956|116;Lake Michigan|1312|1136|132"
  },
  ne: {
    state: "Québec|703|625|66;Newfoundland|1234|650|134;and Labrador|1234|668|126;Maine|899|1072|56;New Brunswick /|1050|1004|148;Nouveau-|1050|1022|86;Brunswick|1050|1040|90;Nova Scotia|1211|1060|108;New York|566|1188|82;Pennsylvania|493|1267|120;Ohio|258|1302|42;Indiana|94|1330|70",
    city: "Ottawa|590|1051|76;Québec|800|988|80;Montréal|743|1061|90;Toronto|415|1136|80;Halifax|1160|1089|74;Boston|808|1221|74;New York|669|1299|98;Philadelphia|614|1336|130;Detroit|242|1198|72;Chicago|34|1220|74;Island of|1475|880|56;Newfoundl|1460|897|78",
    water: "Détroit|540|240|76;d'Hudson|542|258|96;Ungava|957|385|40;James|336|687|56;Bay|336|704|34;Lake Huron|280|1099|100;Golfe du|1305|873|90;Saint-Laurent /|1305|892|160;Gulf of|1305|911|70;Saint Lawrence|1305|930|164;Gulf of|940|1160|64;Maine|937|1177|58"
  },
  us: {
    state: "Utah|710|501|42;Nevada|481|547|64;California|331|603|86;Colorado|973|527|78;Nebraska|1214|409|82;Kansas|1290|550|60;Oklahoma|1340|700|88;Arizona|706|753|66;New Mexico|951|753|102;Texas|1225|890|44;Baja California|546|936|128;Sonora|754|979|62;Chihuahua|951|1013|92;Coahuila|1116|1073|76;de Zaragoza|1116|1094|106;Baja California|710|1158|128;Sur|708|1180|26;Iowa|1518|389|44",
    city: "Salt Lake|694|410|88;City|694|432|36;Denver|998|480|74;Lincoln|1360|430|70;Kansas City|1455|511|112;Sacramento|272|534|118;San Jose|210|607|94;Fresno|346|648|68;Las Vegas|550|676|98;Los Angeles|414|776|118;Tijuana|470|820|72;Mexicali|585|829|80;Phoenix|686|803|80;Tucson|734|834|68;Albuquerque|924|699|130;Ciudad Juárez|932|889|136;Dallas|1358|808|60;Tulsa|1393|650|50;Austin|1315|925|62;Houston|1420|950|84;San Antonio|1282|994|120;Torreón|1066|1148|76;Monterrey|1202|1142|106;Reynosa|1341|1139|84"
  },
  mx: {
    state: "Mississippi|1309|49|100;Alabama|1449|49|82;Louisiana|1216|127|86;Durango|607|428|82;Tamaulipas|902|410|108;Zacatecas|674|498|92;San Luis|772|499|76;Potosí|772|522|54;Jalisco|674|606|58;Oaxaca|996|778|70",
    city: "Baton Rouge|1239|167|138;La Paz|337|434|66;Culiacán|475|434|90;Saltillo|775|405|68;Aguascalientes|804|557|160;León|778|592|52;Ciudad de|864|625|106;México|864|652|76;Morelia|717|658|78;Puebla|909|707|74;Veracruz|1006|668|94;Acapulco|828|778|98;Tuxtla Gutiérrez|1148|815|168;Mérida|1313|584|76;Cancún|1443|606|80;Ciudad de|1204|886|106;Guatemala|1200|913|116;Managua|1468|1037|98",
    country: "México|711|463|86;Belize|1378|778|76;Guatemala|1290|850|136;Honduras|1460|890|120;El Salvador|1343|943|136;Nicaragua|1506|981|124"
  },
  at: {
    state: "Illinois|161|190|54;Missouri|34|257|72;Arkansas|34|426|74;Kentucky|364|284|76;West Virginia|555|230|106;Virginia|638|273|62;Tennessee|297|377|80;North Carolina|618|408|124;South Carolina|541|481|122;Georgia|424|525|68;Florida|494|758|58",
    city: "Washington|690|250|116;Richmond|673|310|94;Raleigh|622|366|70;Memphis|137|397|88;Charlotte|476|406|88;Atlanta|377|489|70;Jacksonville|493|655|112;Miami|556|867|60;Nassau|676|867|70;La Habana|463|998|102;Santa Clara|628|1012|108;Camagüey|710|1061|100;Santiago|740|1141|84;de Cuba|740|1167|78;San Juan|1153|1221|84",
    country: "Bermuda|1211|544|104;The Bahamas|676|931|152;Cuba|560|1054|58;Turks and|912|1039|110;Caicos Islands|912|1067|162;Cayman|567|1127|90;Islands|567|1156|82;República|987|1145|112;Dominicana|987|1174|132;Ayiti|878|1174|46;Jamaica|683|1235|90;Anguilla|1278|1200|94;Antigua|1331|1238|90;and Barbuda|1331|1267|146;Dominica|1356|1343|104;Saint Vincent|1360|1428|150;and the|1360|1458|88;Grenadines|1360|1488|130"
  }
};
function add(parent, name, attrs) {
  const el = document.createElementNS(NS, name);
  for (const k in attrs) el.setAttribute(k, attrs[k]);
  parent.appendChild(el);
  return el;
}
const labelLayer = document.getElementById("labels");
for (const key in labels) {
  const g = add(labelLayer, "g", { transform: sheets[key] });
  for (const kind in labels[key]) {
    for (const item of labels[key][kind].split(";")) {
      const [text, x, y, w] = item.split("|");
      const size = kind === "country" ? 25 : key === "nw" || key === "mid" || key === "ne" ? 18 : 21;
      add(g, "text", { class: kind, x, y, textLength: w, lengthAdjust: "spacingAndGlyphs", "font-size": size }).textContent = text;
    }
  }
}
// Small lakes, woods and glaciers: sheet, x, y, width, height, count, size, colour
const LAKE = "#aad3df", WOOD = "#c0dcb4", ICE = "#b4d8fb", LAND = "#f2efe9", FARM = "#e6eccb";
const fields = [
  ["nw", 1300, 20, 268, 260, 110, 9, LAKE], ["nw", 900, 20, 400, 230, 25, 7, LAKE], ["nw", 1430, 380, 130, 190, 12, 7, LAKE],
  ["nw", 480, 40, 400, 220, 22, 5, LAKE], ["nw", 10, 30, 440, 220, 25, 5, LAKE],
  ["nw", 660, 440, 220, 170, 90, 14, LAKE], ["nw", 900, 600, 110, 180, 45, 12, LAKE], ["nw", 640, 410, 120, 60, 30, 10, LAKE],
  ["nw", 10, 340, 230, 50, 50, 10, LAKE], ["nw", 1000, 770, 160, 60, 25, 9, LAKE],
  ["mid", 0, 70, 380, 270, 210, 10, LAKE], ["mid", 380, 30, 230, 320, 70, 9, LAKE], ["mid", 610, 70, 370, 280, 170, 12, LAKE],
  ["mid", 640, 20, 600, 90, 35, 9, LAKE], ["mid", 240, 390, 370, 240, 95, 11, LAKE], ["mid", 620, 380, 330, 170, 50, 9, LAKE],
  ["mid", 650, 640, 130, 170, 55, 12, LAKE], ["mid", 940, 630, 330, 240, 65, 10, LAKE], ["mid", 870, 890, 190, 140, 35, 8, LAKE],
  ["ne", 480, 340, 380, 260, 70, 9, LAKE], ["ne", 500, 600, 450, 200, 120, 12, LAKE], ["ne", 900, 440, 200, 180, 40, 9, LAKE],
  ["ne", 1000, 580, 150, 130, 80, 12, LAKE], ["ne", 20, 610, 250, 130, 25, 8, LAKE], ["ne", 460, 800, 450, 230, 60, 9, LAKE],
  ["ne", 1160, 590, 290, 110, 50, 9, LAKE], ["ne", 810, 970, 150, 120, 35, 7, LAKE], ["ne", 1120, 390, 80, 200, 50, 16, LAKE],
  ["ne", 1180, 470, 90, 140, 45, 16, LAKE], ["ne", 1270, 560, 140, 70, 35, 14, LAKE], ["ne", 820, 1110, 150, 35, 25, 9, LAKE],
  ["us", 210, 60, 25, 100, 25, 8, LAKE], ["us", 820, 60, 200, 80, 15, 8, LAKE], ["us", 1050, 70, 300, 100, 20, 6, LAKE],
  ["us", 1150, 600, 380, 400, 45, 5, LAKE], ["at", 0, 300, 430, 300, 60, 5, LAKE], ["at", 470, 650, 70, 150, 25, 5, LAKE],
  ["mx", 1150, 160, 210, 35, 35, 9, LAKE],
  ["nw", 500, 280, 300, 100, 130, 9, WOOD], ["nw", 820, 280, 520, 80, 160, 10, WOOD], ["nw", 1170, 760, 160, 120, 90, 12, WOOD],
  ["nw", 1100, 710, 120, 50, 20, 12, WOOD], ["nw", 870, 460, 80, 80, 25, 10, WOOD], ["mid", 240, 660, 340, 40, 110, 12, WOOD],
  ["mid", 550, 670, 300, 200, 140, 11, WOOD], ["mid", 620, 590, 100, 60, 70, 9, WOOD], ["mid", 0, 640, 90, 120, 50, 10, WOOD],
  ["mid", 1060, 1000, 220, 120, 90, 8, WOOD], ["us", 400, 60, 160, 120, 45, 9, WOOD], ["us", 160, 220, 80, 150, 100, 12, WOOD],
  ["us", 420, 440, 180, 150, 80, 8, WOOD], ["us", 170, 480, 140, 160, 60, 8, WOOD], ["us", 250, 600, 160, 120, 80, 9, WOOD],
  ["us", 600, 550, 140, 150, 40, 9, WOOD], ["us", 880, 400, 150, 200, 40, 8, WOOD], ["us", 400, 730, 80, 30, 20, 9, WOOD],
  ["ne", 690, 1080, 120, 120, 70, 9, WOOD], ["ne", 380, 1090, 200, 30, 45, 10, WOOD], ["at", 380, 170, 250, 220, 120, 8, WOOD],
  ["at", 30, 230, 140, 90, 60, 9, WOOD], ["at", 590, 90, 160, 90, 50, 9, WOOD], ["at", 110, 400, 360, 220, 70, 7, WOOD],
  ["at", 210, 1320, 200, 180, 50, 9, WOOD], ["mx", 600, 540, 360, 140, 130, 8, WOOD], ["mx", 780, 300, 70, 160, 40, 8, WOOD],
  ["at", 640, 1040, 130, 60, 40, 9, WOOD], ["us", 1040, 440, 80, 160, 25, 9, FARM], ["mid", 40, 790, 160, 60, 35, 9, FARM],
  ["us", 1150, 50, 250, 90, 20, 7, FARM], ["at", 130, 110, 110, 80, 30, 8, FARM], ["at", 210, 590, 280, 40, 25, 8, FARM],
  ["nw", 10, 220, 95, 20, 100, 12, ICE], ["nw", 190, 195, 80, 14, 60, 9, ICE], ["nw", 280, 205, 55, 14, 40, 9, ICE],
  ["nw", 150, 290, 140, 35, 130, 10, ICE], ["nw", 335, 262, 120, 30, 90, 10, ICE], ["nw", 300, 325, 190, 28, 150, 11, ICE],
  ["nw", 460, 298, 120, 70, 260, 13, ICE], ["nw", 545, 350, 70, 60, 100, 11, ICE], ["nw", 600, 380, 160, 50, 110, 10, ICE],
  ["nw", 145, 315, 30, 50, 40, 9, ICE], ["nw", 800, 465, 40, 55, 50, 9, ICE], ["nw", 880, 538, 60, 20, 40, 10, ICE],
  ["nw", 60, 360, 60, 30, 50, 9, ICE], ["nw", 1070, 762, 60, 18, 20, 9, ICE],
  ["nw", 1170, 795, 35, 50, 35, 9, ICE], ["nw", 1300, 690, 180, 70, 50, 8, ICE], ["ne", 1055, 45, 60, 30, 60, 8, ICE],
  ["ne", 1045, 165, 60, 25, 30, 8, ICE], ["ne", 385, 515, 65, 50, 35, 9, LAND],
  ["ne", 15, 800, 370, 30, 90, 9, LAND], ["ne", 560, 870, 300, 130, 80, 6, LAND], ["ne", 20, 830, 360, 170, 60, 5, LAND],
  ["nw", 1190, 530, 70, 60, 30, 9, LAND], ["nw", 1230, 580, 80, 60, 40, 9, LAND], ["nw", 1280, 620, 90, 80, 60, 9, LAND],
  ["nw", 1350, 680, 90, 70, 70, 9, LAND], ["nw", 1420, 720, 90, 80, 70, 9, LAND], ["nw", 1490, 770, 70, 80, 60, 9, LAND],
  ["nw", 1260, 515, 75, 60, 45, 10, LAND], ["nw", 1450, 610, 110, 60, 25, 8, LAND], ["nw", 1040, 400, 130, 60, 40, 10, LAND],
  ["nw", 1440, 800, 30, 80, 25, 9, LAND], ["mid", 540, 680, 110, 50, 25, 8, LAND], ["mid", 240, 640, 310, 25, 30, 7, LAND],
  ["ne", 980, 900, 110, 130, 25, 6, LAND], ["nw", 560, 280, 90, 50, 40, 7, LAND]
];
let seed = 7;
const rnd = () => (seed = (seed * 16807) % 2147483647) / 2147483647;
const speckLayer = document.getElementById("specks");
for (const [key, x, y, w, h, n, s, colour] of fields) {
  let d = "";
  for (let i = 0; i < n; i++) {
    const a = s * (0.35 + rnd()), b = s * 0.35 * (0.5 + rnd());
    const px = x + rnd() * w, py = y + rnd() * h, t = (rnd() - 0.6) * b;
    d += `M${px.toFixed(1)} ${py.toFixed(1)}l${a.toFixed(1)} ${t.toFixed(1)} ${(a * 0.3).toFixed(1)} ${b.toFixed(1)} ${(-a).toFixed(1)} ${(b * 0.6).toFixed(1)}z`;
  }
  add(speckLayer, "path", { d, fill: colour, transform: sheets[key] });
}
```
